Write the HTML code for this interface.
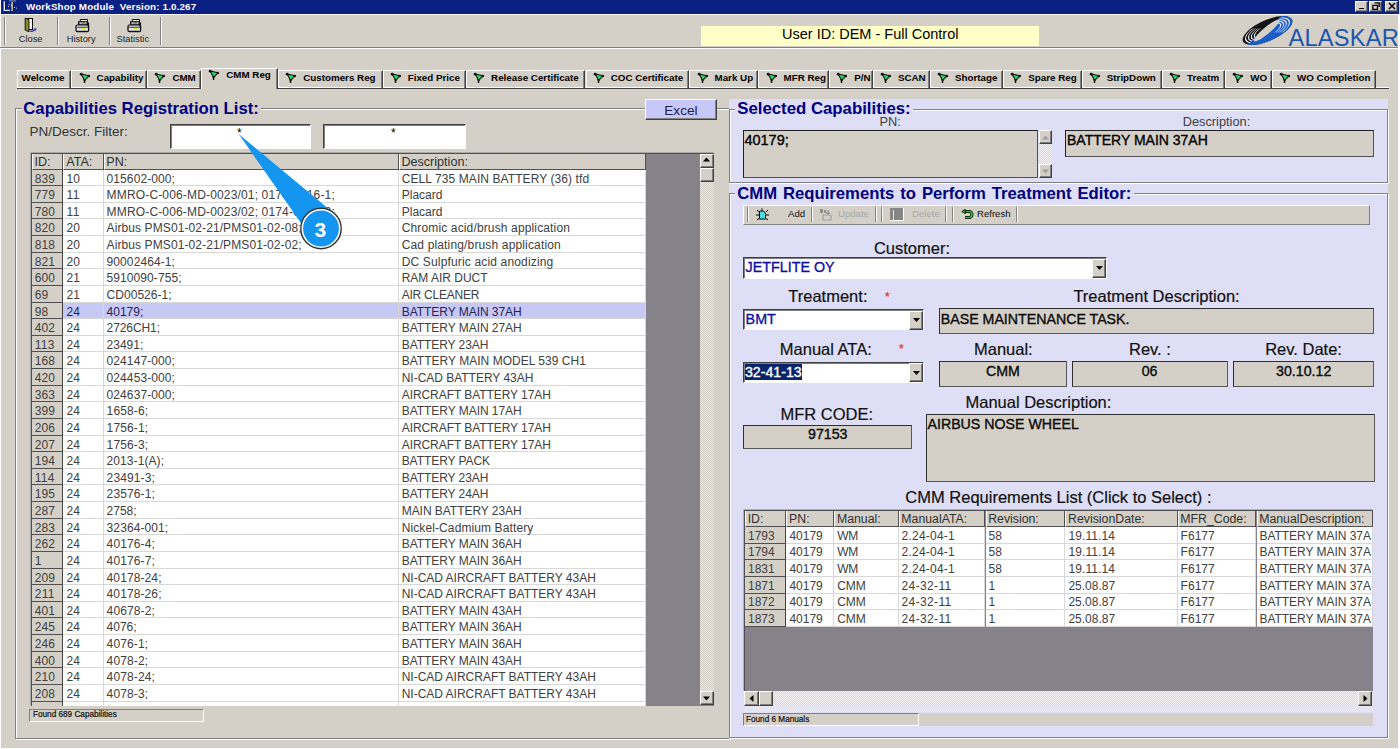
<!DOCTYPE html><html><head><meta charset="utf-8"><style>
*{box-sizing:border-box;margin:0;padding:0}
html,body{width:1400px;height:749px;overflow:hidden;background:#D4D0C8;font-family:"Liberation Sans",sans-serif;color:#000}
.ab{position:absolute}
.t{position:absolute;white-space:nowrap;line-height:1}
.sunk{position:absolute;border-top:1px solid #808080;border-left:1px solid #808080;border-bottom:1px solid #fff;border-right:1px solid #fff}
.sunk2{position:absolute;border:1px solid;border-color:#404040 #fff #fff #404040;box-shadow:inset 1px 1px 0 #808080}
.grp{position:absolute;border:1px solid #808080;box-shadow:1px 1px 0 #fff, inset 1px 1px 0 #fff}
.gtitle{position:absolute;font-weight:bold;color:#000080;white-space:nowrap;line-height:1}
.tab{position:absolute;top:69.5px;height:18px;border-top:1px solid #fff;border-left:1px solid #fff;border-right:1px solid #404040;box-shadow:inset -1px 0 0 #808080;font-weight:bold;font-size:9.8px;white-space:nowrap}
.tab span{position:absolute;top:3px;line-height:1}
.flag{position:absolute;top:3px;width:11px;height:12px;overflow:visible}
.row{position:absolute;height:16.67px}
.cell{position:absolute;white-space:nowrap;overflow:hidden;line-height:1}
.btn3d{position:absolute;background:#D4D0C8;border:1px solid;border-color:#fff #404040 #404040 #fff;box-shadow:inset -1px -1px 0 #808080}
</style></head><body>
<div class="ab" style="left:0;top:0;width:1400px;height:749px;border-left:1px solid #fff;border-top:1px solid #fff;"></div>
<div class="ab" style="left:1px;top:0;width:1398px;height:13.7px;background:#0A2082"></div>
<svg class="ab" style="left:0;top:0" width="20" height="14" viewBox="0 0 20 14"><rect x="9" y="0" width="7" height="1.6" fill="#5a6aa0"/><path d="M3.6 1.2h1.4v8.6h4.8v1.3h-6.2z" fill="#e8e8f0"/><rect x="5" y="2" width="1" height="8" fill="#202020"/><rect x="11.2" y="2" width="1.9" height="9" fill="#b0b088"/><rect x="13.1" y="2" width="0.9" height="9" fill="#101810"/><circle cx="9.3" cy="4.5" r="0.6" fill="#fff"/><circle cx="11.4" cy="5.6" r="0.6" fill="#fff"/><circle cx="8.4" cy="6.5" r="0.6" fill="#fff"/><circle cx="14.5" cy="7.4" r="0.6" fill="#ddd"/><circle cx="16.5" cy="8.2" r="0.6" fill="#aab"/></svg>
<div class="t" style="left:26px;top:2px;font-size:9.8px;font-weight:bold;color:#fff;letter-spacing:0.15px">WorkShop Module&nbsp; Version: 1.0.267</div>
<div class="btn3d" style="left:1355px;top:0.5px;width:13px;height:11px"></div>
<div class="btn3d" style="left:1369px;top:0.5px;width:13px;height:11px"></div>
<div class="btn3d" style="left:1385px;top:0.5px;width:13px;height:11px"></div>
<div class="ab" style="left:1359px;top:7.5px;width:5px;height:1.6px;background:#000"></div>
<svg class="ab" style="left:1372px;top:1.5px" width="8" height="8" viewBox="0 0 8 8"><path d="M2.5 0.8h4.7v4.2M0.8 3.3h4.7v4h-4.7z" stroke="#000" stroke-width="1.3" fill="none"/></svg>
<svg class="ab" style="left:1388px;top:1.8px" width="8" height="8" viewBox="0 0 8 8"><path d="M1 1L7 7M7 1L1 7" stroke="#000" stroke-width="1.5"/></svg>
<div class="ab" style="left:1px;top:13.7px;width:1398px;height:1px;background:#fff"></div>
<div class="ab" style="left:0;top:46.8px;width:1400px;height:1px;background:#808080"></div>
<div class="ab" style="left:0;top:47.8px;width:1400px;height:1px;background:#fff"></div>
<div class="ab" style="left:4px;top:17px;width:1px;height:28px;background:#808080"></div><div class="ab" style="left:5px;top:17px;width:1px;height:28px;background:#fff"></div>
<div class="ab" style="left:56.6px;top:17px;width:1px;height:28px;background:#808080"></div><div class="ab" style="left:57.6px;top:17px;width:1px;height:28px;background:#fff"></div>
<div class="ab" style="left:108.6px;top:17px;width:1px;height:28px;background:#808080"></div><div class="ab" style="left:109.6px;top:17px;width:1px;height:28px;background:#fff"></div>
<div class="ab" style="left:159.6px;top:17px;width:1px;height:28px;background:#808080"></div><div class="ab" style="left:160.6px;top:17px;width:1px;height:28px;background:#fff"></div>
<svg class="ab" style="left:23px;top:17px" width="16" height="16" viewBox="0 0 16 16"><path d="M3.5 1.5 h6 v11 h-6z" fill="#fff" stroke="#111" stroke-width="1.1"/><path d="M2.2 1.2 L6 2.6 V14.6 L2.2 13.2z" fill="#8E8C2A" stroke="#111" stroke-width="1"/><path d="M6.8 14 q2.5 1.2 5 -1.2" stroke="#3030B0" stroke-width="1.3" fill="none"/><path d="M10.8 11.4 L13.6 11.6 L12.6 14.2z" fill="#3030B0"/></svg>
<svg class="ab" style="left:72px;top:16px" width="22" height="18" viewBox="0 0 22 18"><path d="M8.3 3.5 H15.5 V6 H8.3z" fill="#fff" stroke="#111" stroke-width="1"/><path d="M6.6 5.8 H15.2 V9 H6.6z" fill="#8c8c8c" stroke="#111" stroke-width="1.1"/><path d="M8 7 h1.5M13 7.5 l1 -1.2" stroke="#fff" stroke-width="0.9"/><rect x="15.3" y="6.4" width="1.8" height="4" fill="#111"/><rect x="4" y="9.2" width="12.6" height="6.4" rx="1.3" fill="#e6e6e6" stroke="#111" stroke-width="1.3"/><path d="M5 10.2 H14.6" stroke="#fff" stroke-width="0.9"/><path d="M4.5 11.2 H16" stroke="#111" stroke-width="0.9"/><path d="M9.5 12.7 H13.5" stroke="#d0f038" stroke-width="1.3"/><path d="M5 14.4 H15.5" stroke="#a8a8a8" stroke-width="0.9"/></svg>
<svg class="ab" style="left:123.5px;top:16px" width="22" height="18" viewBox="0 0 22 18"><path d="M8.3 3.5 H15.5 V6 H8.3z" fill="#fff" stroke="#111" stroke-width="1"/><path d="M6.6 5.8 H15.2 V9 H6.6z" fill="#8c8c8c" stroke="#111" stroke-width="1.1"/><path d="M8 7 h1.5M13 7.5 l1 -1.2" stroke="#fff" stroke-width="0.9"/><rect x="15.3" y="6.4" width="1.8" height="4" fill="#111"/><rect x="4" y="9.2" width="12.6" height="6.4" rx="1.3" fill="#e6e6e6" stroke="#111" stroke-width="1.3"/><path d="M5 10.2 H14.6" stroke="#fff" stroke-width="0.9"/><path d="M4.5 11.2 H16" stroke="#111" stroke-width="0.9"/><path d="M9.5 12.7 H13.5" stroke="#d0f038" stroke-width="1.3"/><path d="M5 14.4 H15.5" stroke="#a8a8a8" stroke-width="0.9"/></svg>
<div class="t" style="left:18.7px;top:34.5px;font-size:9.3px;color:#222">Close</div>
<div class="t" style="left:66.7px;top:34.5px;font-size:9.3px;color:#222">History</div>
<div class="t" style="left:116.5px;top:34.5px;font-size:9.3px;color:#222">Statistic</div>
<div class="ab" style="left:701.4px;top:25.9px;width:337.6px;height:20.6px;background:#FFFFC8"></div>
<div class="t" style="left:782px;top:26.5px;font-size:14.5px;color:#000">User ID: DEM - Full Control</div>
<svg class="ab" style="left:1240px;top:14px" width="56" height="34" viewBox="0 0 56 34">
<defs>
<clipPath id="outer"><ellipse cx="0" cy="0" rx="19.2" ry="14.4"/></clipPath>
<clipPath id="lq"><rect x="-30" y="-2" width="26" height="30"/></clipPath>
<clipPath id="rq"><rect x="-1" y="-30" width="30" height="32"/></clipPath>
</defs>
<g transform="translate(27.5 16.5) matrix(1 0 -1.1 1 0 0)">
<g clip-path="url(#outer)">
<rect x="-30" y="-20" width="60" height="40" fill="#141414"/>
<path d="M-6 20 L-1.5 -20 L30 -20 L30 20z" fill="#1A5CC8"/>
<g fill="none" stroke="#F0F0F8" stroke-width="0.75">
<g clip-path="url(#lq)">
<ellipse rx="17" ry="12.6"/><ellipse rx="14.6" ry="11"/><ellipse rx="12.2" ry="9.5"/><ellipse rx="9.8" ry="8"/>
</g>
<g clip-path="url(#rq)">
<ellipse rx="17" ry="12.6"/><ellipse rx="14.6" ry="11"/><ellipse rx="12.2" ry="9.5"/><ellipse rx="9.8" ry="8"/>
</g>
</g>
</g>
<ellipse cx="-0.8" cy="0" rx="5.2" ry="10.8" fill="#D4D0C8"/>
</g>
</svg>
<div class="t" style="left:1288.5px;top:26.5px;font-size:23.6px;color:#1a56b0;letter-spacing:0.25px">ALASKAR</div>
<div class="ab" style="left:17px;top:87px;width:1371.5px;height:1px;background:#fff"></div>
<div class="ab" style="left:17px;top:88px;width:1371.5px;height:1.3px;background:#404040"></div>
<div class="tab" style="left:17.3px;top:69.5px;width:54.10000000000001px;height:18px;"><span style="left:3.3px;top:2.3px">Welcome</span></div>
<div class="tab" style="left:71.4px;top:69.5px;width:75.79999999999998px;height:18px;"><svg class="flag" style="left:6.3px;top:2.2px" viewBox="0 0 11 12"><path d="M5.3 6 L5.6 10" stroke="#111" stroke-width="1.5"/><path d="M2.2 1 L10 2.8 L5.6 7.6 z" fill="#26D862" stroke="#111" stroke-width="1.1" stroke-linejoin="round"/><circle cx="2.2" cy="1.2" r="1.4" fill="#111"/><circle cx="9.8" cy="3" r="1.3" fill="#111"/><circle cx="6" cy="6.8" r="0.9" fill="#111"/></svg><span style="left:24.2px;top:2.3px">Capability</span></div>
<div class="tab" style="left:147.2px;top:69.5px;width:53.80000000000001px;height:18px;"><svg class="flag" style="left:6.3px;top:2.2px" viewBox="0 0 11 12"><path d="M5.3 6 L5.6 10" stroke="#111" stroke-width="1.5"/><path d="M2.2 1 L10 2.8 L5.6 7.6 z" fill="#26D862" stroke="#111" stroke-width="1.1" stroke-linejoin="round"/><circle cx="2.2" cy="1.2" r="1.4" fill="#111"/><circle cx="9.8" cy="3" r="1.3" fill="#111"/><circle cx="6" cy="6.8" r="0.9" fill="#111"/></svg><span style="left:24.2px;top:2.3px">CMM</span></div>
<div class="tab" style="left:201px;top:67.5px;width:77px;height:21px;background:#D4D0C8;z-index:2;"><svg class="flag" style="left:6.3px;top:1px" viewBox="0 0 11 12"><path d="M5.3 6 L5.6 10" stroke="#111" stroke-width="1.5"/><path d="M2.2 1 L10 2.8 L5.6 7.6 z" fill="#26D862" stroke="#111" stroke-width="1.1" stroke-linejoin="round"/><circle cx="2.2" cy="1.2" r="1.4" fill="#111"/><circle cx="9.8" cy="3" r="1.3" fill="#111"/><circle cx="6" cy="6.8" r="0.9" fill="#111"/></svg><span style="left:24.2px;top:1.2px">CMM Reg</span></div>
<div class="tab" style="left:278px;top:69.5px;width:104.5px;height:18px;"><svg class="flag" style="left:6.3px;top:2.2px" viewBox="0 0 11 12"><path d="M5.3 6 L5.6 10" stroke="#111" stroke-width="1.5"/><path d="M2.2 1 L10 2.8 L5.6 7.6 z" fill="#26D862" stroke="#111" stroke-width="1.1" stroke-linejoin="round"/><circle cx="2.2" cy="1.2" r="1.4" fill="#111"/><circle cx="9.8" cy="3" r="1.3" fill="#111"/><circle cx="6" cy="6.8" r="0.9" fill="#111"/></svg><span style="left:24.2px;top:2.3px">Customers Reg</span></div>
<div class="tab" style="left:382.5px;top:69.5px;width:83.39999999999998px;height:18px;"><svg class="flag" style="left:6.3px;top:2.2px" viewBox="0 0 11 12"><path d="M5.3 6 L5.6 10" stroke="#111" stroke-width="1.5"/><path d="M2.2 1 L10 2.8 L5.6 7.6 z" fill="#26D862" stroke="#111" stroke-width="1.1" stroke-linejoin="round"/><circle cx="2.2" cy="1.2" r="1.4" fill="#111"/><circle cx="9.8" cy="3" r="1.3" fill="#111"/><circle cx="6" cy="6.8" r="0.9" fill="#111"/></svg><span style="left:24.2px;top:2.3px">Fixed Price</span></div>
<div class="tab" style="left:465.9px;top:69.5px;width:119.60000000000002px;height:18px;"><svg class="flag" style="left:6.3px;top:2.2px" viewBox="0 0 11 12"><path d="M5.3 6 L5.6 10" stroke="#111" stroke-width="1.5"/><path d="M2.2 1 L10 2.8 L5.6 7.6 z" fill="#26D862" stroke="#111" stroke-width="1.1" stroke-linejoin="round"/><circle cx="2.2" cy="1.2" r="1.4" fill="#111"/><circle cx="9.8" cy="3" r="1.3" fill="#111"/><circle cx="6" cy="6.8" r="0.9" fill="#111"/></svg><span style="left:24.2px;top:2.3px">Release Certificate</span></div>
<div class="tab" style="left:585.5px;top:69.5px;width:103.79999999999995px;height:18px;"><svg class="flag" style="left:6.3px;top:2.2px" viewBox="0 0 11 12"><path d="M5.3 6 L5.6 10" stroke="#111" stroke-width="1.5"/><path d="M2.2 1 L10 2.8 L5.6 7.6 z" fill="#26D862" stroke="#111" stroke-width="1.1" stroke-linejoin="round"/><circle cx="2.2" cy="1.2" r="1.4" fill="#111"/><circle cx="9.8" cy="3" r="1.3" fill="#111"/><circle cx="6" cy="6.8" r="0.9" fill="#111"/></svg><span style="left:24.2px;top:2.3px">COC Certificate</span></div>
<div class="tab" style="left:689.3px;top:69.5px;width:69.10000000000002px;height:18px;"><svg class="flag" style="left:6.3px;top:2.2px" viewBox="0 0 11 12"><path d="M5.3 6 L5.6 10" stroke="#111" stroke-width="1.5"/><path d="M2.2 1 L10 2.8 L5.6 7.6 z" fill="#26D862" stroke="#111" stroke-width="1.1" stroke-linejoin="round"/><circle cx="2.2" cy="1.2" r="1.4" fill="#111"/><circle cx="9.8" cy="3" r="1.3" fill="#111"/><circle cx="6" cy="6.8" r="0.9" fill="#111"/></svg><span style="left:24.2px;top:2.3px">Mark Up</span></div>
<div class="tab" style="left:758.4px;top:69.5px;width:70.60000000000002px;height:18px;"><svg class="flag" style="left:6.3px;top:2.2px" viewBox="0 0 11 12"><path d="M5.3 6 L5.6 10" stroke="#111" stroke-width="1.5"/><path d="M2.2 1 L10 2.8 L5.6 7.6 z" fill="#26D862" stroke="#111" stroke-width="1.1" stroke-linejoin="round"/><circle cx="2.2" cy="1.2" r="1.4" fill="#111"/><circle cx="9.8" cy="3" r="1.3" fill="#111"/><circle cx="6" cy="6.8" r="0.9" fill="#111"/></svg><span style="left:24.2px;top:2.3px">MFR Reg</span></div>
<div class="tab" style="left:829px;top:69.5px;width:43.700000000000045px;height:18px;"><svg class="flag" style="left:6.3px;top:2.2px" viewBox="0 0 11 12"><path d="M5.3 6 L5.6 10" stroke="#111" stroke-width="1.5"/><path d="M2.2 1 L10 2.8 L5.6 7.6 z" fill="#26D862" stroke="#111" stroke-width="1.1" stroke-linejoin="round"/><circle cx="2.2" cy="1.2" r="1.4" fill="#111"/><circle cx="9.8" cy="3" r="1.3" fill="#111"/><circle cx="6" cy="6.8" r="0.9" fill="#111"/></svg><span style="left:24.2px;top:2.3px">P/N</span></div>
<div class="tab" style="left:872.7px;top:69.5px;width:57.09999999999991px;height:18px;"><svg class="flag" style="left:6.3px;top:2.2px" viewBox="0 0 11 12"><path d="M5.3 6 L5.6 10" stroke="#111" stroke-width="1.5"/><path d="M2.2 1 L10 2.8 L5.6 7.6 z" fill="#26D862" stroke="#111" stroke-width="1.1" stroke-linejoin="round"/><circle cx="2.2" cy="1.2" r="1.4" fill="#111"/><circle cx="9.8" cy="3" r="1.3" fill="#111"/><circle cx="6" cy="6.8" r="0.9" fill="#111"/></svg><span style="left:24.2px;top:2.3px">SCAN</span></div>
<div class="tab" style="left:929.8px;top:69.5px;width:73.20000000000005px;height:18px;"><svg class="flag" style="left:6.3px;top:2.2px" viewBox="0 0 11 12"><path d="M5.3 6 L5.6 10" stroke="#111" stroke-width="1.5"/><path d="M2.2 1 L10 2.8 L5.6 7.6 z" fill="#26D862" stroke="#111" stroke-width="1.1" stroke-linejoin="round"/><circle cx="2.2" cy="1.2" r="1.4" fill="#111"/><circle cx="9.8" cy="3" r="1.3" fill="#111"/><circle cx="6" cy="6.8" r="0.9" fill="#111"/></svg><span style="left:24.2px;top:2.3px">Shortage</span></div>
<div class="tab" style="left:1003px;top:69.5px;width:78.59999999999991px;height:18px;"><svg class="flag" style="left:6.3px;top:2.2px" viewBox="0 0 11 12"><path d="M5.3 6 L5.6 10" stroke="#111" stroke-width="1.5"/><path d="M2.2 1 L10 2.8 L5.6 7.6 z" fill="#26D862" stroke="#111" stroke-width="1.1" stroke-linejoin="round"/><circle cx="2.2" cy="1.2" r="1.4" fill="#111"/><circle cx="9.8" cy="3" r="1.3" fill="#111"/><circle cx="6" cy="6.8" r="0.9" fill="#111"/></svg><span style="left:24.2px;top:2.3px">Spare Reg</span></div>
<div class="tab" style="left:1081.6px;top:69.5px;width:80.20000000000005px;height:18px;"><svg class="flag" style="left:6.3px;top:2.2px" viewBox="0 0 11 12"><path d="M5.3 6 L5.6 10" stroke="#111" stroke-width="1.5"/><path d="M2.2 1 L10 2.8 L5.6 7.6 z" fill="#26D862" stroke="#111" stroke-width="1.1" stroke-linejoin="round"/><circle cx="2.2" cy="1.2" r="1.4" fill="#111"/><circle cx="9.8" cy="3" r="1.3" fill="#111"/><circle cx="6" cy="6.8" r="0.9" fill="#111"/></svg><span style="left:24.2px;top:2.3px">StripDown</span></div>
<div class="tab" style="left:1161.8px;top:69.5px;width:63.200000000000045px;height:18px;"><svg class="flag" style="left:6.3px;top:2.2px" viewBox="0 0 11 12"><path d="M5.3 6 L5.6 10" stroke="#111" stroke-width="1.5"/><path d="M2.2 1 L10 2.8 L5.6 7.6 z" fill="#26D862" stroke="#111" stroke-width="1.1" stroke-linejoin="round"/><circle cx="2.2" cy="1.2" r="1.4" fill="#111"/><circle cx="9.8" cy="3" r="1.3" fill="#111"/><circle cx="6" cy="6.8" r="0.9" fill="#111"/></svg><span style="left:24.2px;top:2.3px">Treatm</span></div>
<div class="tab" style="left:1225px;top:69.5px;width:46.799999999999955px;height:18px;"><svg class="flag" style="left:6.3px;top:2.2px" viewBox="0 0 11 12"><path d="M5.3 6 L5.6 10" stroke="#111" stroke-width="1.5"/><path d="M2.2 1 L10 2.8 L5.6 7.6 z" fill="#26D862" stroke="#111" stroke-width="1.1" stroke-linejoin="round"/><circle cx="2.2" cy="1.2" r="1.4" fill="#111"/><circle cx="9.8" cy="3" r="1.3" fill="#111"/><circle cx="6" cy="6.8" r="0.9" fill="#111"/></svg><span style="left:24.2px;top:2.3px">WO</span></div>
<div class="tab" style="left:1271.8px;top:69.5px;width:103.79999999999995px;height:18px;"><svg class="flag" style="left:6.3px;top:2.2px" viewBox="0 0 11 12"><path d="M5.3 6 L5.6 10" stroke="#111" stroke-width="1.5"/><path d="M2.2 1 L10 2.8 L5.6 7.6 z" fill="#26D862" stroke="#111" stroke-width="1.1" stroke-linejoin="round"/><circle cx="2.2" cy="1.2" r="1.4" fill="#111"/><circle cx="9.8" cy="3" r="1.3" fill="#111"/><circle cx="6" cy="6.8" r="0.9" fill="#111"/></svg><span style="left:24.2px;top:2.3px">WO Completion</span></div>
<div class="grp" style="left:15.2px;top:108.4px;width:715px;height:630.5px"></div>
<div class="ab" style="left:21.5px;top:100px;width:239.5px;height:16px;background:#D4D0C8"></div>
<div class="gtitle" style="left:23.3px;top:100.9px;font-size:16.7px">Capabilities Registration List:</div>
<div class="btn3d" style="left:645px;top:98.7px;width:71.8px;height:21.3px;background:#C8C8F8"></div>
<div class="t" style="left:664.3px;top:103.5px;font-size:13.6px;color:#202048">Excel</div>
<div class="t" style="left:29.6px;top:125.4px;font-size:13.5px;color:#333">PN/Descr. Filter:</div>
<div class="sunk2" style="left:169.5px;top:124.2px;width:141.0px;height:25px;background:#fff"></div>
<div class="t" style="left:237.0px;top:127px;font-size:12px;color:#000">*</div>
<div class="sunk2" style="left:322.5px;top:124.2px;width:143.0px;height:25px;background:#fff"></div>
<div class="t" style="left:391.0px;top:127px;font-size:12px;color:#000">*</div>
<div class="ab" style="left:30.8px;top:152.5px;width:683.5px;height:553px;border-top:1px solid #505050;border-left:1px solid #505050;box-shadow:-0.6px -0.6px 0 #909090;background:#858289;overflow:hidden">
<div class="ab" style="left:0px;top:0px;width:31.7px;height:16px;background:#D4D0C8;border-left:1px solid #fff;border-right:1px solid #505050;border-bottom:1px solid #505050"></div>
<div class="t" style="left:2.7px;top:2.3px;font-size:12.6px;color:#303030">ID:</div>
<div class="ab" style="left:31.7px;top:0px;width:40.099999999999994px;height:16px;background:#D4D0C8;border-left:1px solid #fff;border-right:1px solid #505050;border-bottom:1px solid #505050"></div>
<div class="t" style="left:34.4px;top:2.3px;font-size:12.6px;color:#303030">ATA:</div>
<div class="ab" style="left:71.8px;top:0px;width:295.09999999999997px;height:16px;background:#D4D0C8;border-left:1px solid #fff;border-right:1px solid #505050;border-bottom:1px solid #505050"></div>
<div class="t" style="left:74.5px;top:2.3px;font-size:12.6px;color:#303030">PN:</div>
<div class="ab" style="left:366.9px;top:0px;width:247.70000000000005px;height:16px;background:#D4D0C8;border-left:1px solid #fff;border-right:1px solid #505050;border-bottom:1px solid #505050"></div>
<div class="t" style="left:369.59999999999997px;top:2.3px;font-size:12.6px;color:#303030">Description:</div>
<div class="ab" style="left:0px;top:16.0px;width:31.7px;height:16.625px;background:#D4D0C8;border-right:1px solid #404040;border-bottom:1px solid #505050"></div>
<div class="t" style="left:3px;top:19.0px;font-size:12px;letter-spacing:-0.007px;color:#404040">839</div>
<div class="ab" style="left:31.7px;top:16.0px;width:40.099999999999994px;height:16.625px;background:#fff;border-right:1px solid #D8D8D8;border-bottom:1px solid #D8D8D8"></div>
<div class="t" style="left:34.7px;top:19.0px;font-size:12px;letter-spacing:-0.007px;color:#404040">10</div>
<div class="ab" style="left:71.8px;top:16.0px;width:295.09999999999997px;height:16.625px;background:#fff;border-right:1px solid #D8D8D8;border-bottom:1px solid #D8D8D8"></div>
<div class="t" style="left:74.8px;top:19.0px;font-size:12px;letter-spacing:0.085px;color:#404040">015602-000;</div>
<div class="ab" style="left:366.9px;top:16.0px;width:247.70000000000005px;height:16.625px;background:#fff;border-right:1px solid #D8D8D8;border-bottom:1px solid #D8D8D8"></div>
<div class="t" style="left:369.9px;top:19.0px;font-size:12px;letter-spacing:0.085px;color:#404040">CELL 735 MAIN BATTERY (36) tfd</div>
<div class="ab" style="left:0px;top:32.625px;width:31.7px;height:16.625px;background:#D4D0C8;border-right:1px solid #404040;border-bottom:1px solid #505050"></div>
<div class="t" style="left:3px;top:35.625px;font-size:12px;letter-spacing:-0.007px;color:#404040">779</div>
<div class="ab" style="left:31.7px;top:32.625px;width:40.099999999999994px;height:16.625px;background:#fff;border-right:1px solid #D8D8D8;border-bottom:1px solid #D8D8D8"></div>
<div class="t" style="left:34.7px;top:35.625px;font-size:12px;letter-spacing:0.438px;color:#404040">11</div>
<div class="ab" style="left:71.8px;top:32.625px;width:295.09999999999997px;height:16.625px;background:#fff;border-right:1px solid #D8D8D8;border-bottom:1px solid #D8D8D8"></div>
<div class="t" style="left:74.8px;top:35.625px;font-size:12px;letter-spacing:0.159px;color:#404040">MMRO-C-006-MD-0023/01; 0174-0016-1;</div>
<div class="ab" style="left:366.9px;top:32.625px;width:247.70000000000005px;height:16.625px;background:#fff;border-right:1px solid #D8D8D8;border-bottom:1px solid #D8D8D8"></div>
<div class="t" style="left:369.9px;top:35.625px;font-size:12px;letter-spacing:0.021px;color:#404040">Placard</div>
<div class="ab" style="left:0px;top:49.25px;width:31.7px;height:16.625px;background:#D4D0C8;border-right:1px solid #404040;border-bottom:1px solid #505050"></div>
<div class="t" style="left:3px;top:52.25px;font-size:12px;letter-spacing:-0.007px;color:#404040">780</div>
<div class="ab" style="left:31.7px;top:49.25px;width:40.099999999999994px;height:16.625px;background:#fff;border-right:1px solid #D8D8D8;border-bottom:1px solid #D8D8D8"></div>
<div class="t" style="left:34.7px;top:52.25px;font-size:12px;letter-spacing:0.438px;color:#404040">11</div>
<div class="ab" style="left:71.8px;top:49.25px;width:295.09999999999997px;height:16.625px;background:#fff;border-right:1px solid #D8D8D8;border-bottom:1px solid #D8D8D8"></div>
<div class="t" style="left:74.8px;top:52.25px;font-size:12px;letter-spacing:0.159px;color:#404040">MMRO-C-006-MD-0023/02; 0174-0016-2;</div>
<div class="ab" style="left:366.9px;top:49.25px;width:247.70000000000005px;height:16.625px;background:#fff;border-right:1px solid #D8D8D8;border-bottom:1px solid #D8D8D8"></div>
<div class="t" style="left:369.9px;top:52.25px;font-size:12px;letter-spacing:0.021px;color:#404040">Placard</div>
<div class="ab" style="left:0px;top:65.875px;width:31.7px;height:16.625px;background:#D4D0C8;border-right:1px solid #404040;border-bottom:1px solid #505050"></div>
<div class="t" style="left:3px;top:68.875px;font-size:12px;letter-spacing:-0.007px;color:#404040">820</div>
<div class="ab" style="left:31.7px;top:65.875px;width:40.099999999999994px;height:16.625px;background:#fff;border-right:1px solid #D8D8D8;border-bottom:1px solid #D8D8D8"></div>
<div class="t" style="left:34.7px;top:68.875px;font-size:12px;letter-spacing:-0.007px;color:#404040">20</div>
<div class="ab" style="left:71.8px;top:65.875px;width:295.09999999999997px;height:16.625px;background:#fff;border-right:1px solid #D8D8D8;border-bottom:1px solid #D8D8D8"></div>
<div class="t" style="left:74.8px;top:68.875px;font-size:12px;letter-spacing:0.094px;color:#404040">Airbus PMS01-02-21/PMS01-02-08;</div>
<div class="ab" style="left:366.9px;top:65.875px;width:247.70000000000005px;height:16.625px;background:#fff;border-right:1px solid #D8D8D8;border-bottom:1px solid #D8D8D8"></div>
<div class="t" style="left:369.9px;top:68.875px;font-size:12px;letter-spacing:0.142px;color:#404040">Chromic acid/brush application</div>
<div class="ab" style="left:0px;top:82.5px;width:31.7px;height:16.625px;background:#D4D0C8;border-right:1px solid #404040;border-bottom:1px solid #505050"></div>
<div class="t" style="left:3px;top:85.5px;font-size:12px;letter-spacing:-0.007px;color:#404040">818</div>
<div class="ab" style="left:31.7px;top:82.5px;width:40.099999999999994px;height:16.625px;background:#fff;border-right:1px solid #D8D8D8;border-bottom:1px solid #D8D8D8"></div>
<div class="t" style="left:34.7px;top:85.5px;font-size:12px;letter-spacing:-0.007px;color:#404040">20</div>
<div class="ab" style="left:71.8px;top:82.5px;width:295.09999999999997px;height:16.625px;background:#fff;border-right:1px solid #D8D8D8;border-bottom:1px solid #D8D8D8"></div>
<div class="t" style="left:74.8px;top:85.5px;font-size:12px;letter-spacing:0.094px;color:#404040">Airbus PMS01-02-21/PMS01-02-02;</div>
<div class="ab" style="left:366.9px;top:82.5px;width:247.70000000000005px;height:16.625px;background:#fff;border-right:1px solid #D8D8D8;border-bottom:1px solid #D8D8D8"></div>
<div class="t" style="left:369.9px;top:85.5px;font-size:12px;letter-spacing:0.152px;color:#404040">Cad plating/brush application</div>
<div class="ab" style="left:0px;top:99.125px;width:31.7px;height:16.625px;background:#D4D0C8;border-right:1px solid #404040;border-bottom:1px solid #505050"></div>
<div class="t" style="left:3px;top:102.125px;font-size:12px;letter-spacing:-0.007px;color:#404040">821</div>
<div class="ab" style="left:31.7px;top:99.125px;width:40.099999999999994px;height:16.625px;background:#fff;border-right:1px solid #D8D8D8;border-bottom:1px solid #D8D8D8"></div>
<div class="t" style="left:34.7px;top:102.125px;font-size:12px;letter-spacing:-0.007px;color:#404040">20</div>
<div class="ab" style="left:71.8px;top:99.125px;width:295.09999999999997px;height:16.625px;background:#fff;border-right:1px solid #D8D8D8;border-bottom:1px solid #D8D8D8"></div>
<div class="t" style="left:74.8px;top:102.125px;font-size:12px;letter-spacing:0.085px;color:#404040">90002464-1;</div>
<div class="ab" style="left:366.9px;top:99.125px;width:247.70000000000005px;height:16.625px;background:#fff;border-right:1px solid #D8D8D8;border-bottom:1px solid #D8D8D8"></div>
<div class="t" style="left:369.9px;top:102.125px;font-size:12px;letter-spacing:0.158px;color:#404040">DC Sulpfuric acid anodizing</div>
<div class="ab" style="left:0px;top:115.75px;width:31.7px;height:16.625px;background:#D4D0C8;border-right:1px solid #404040;border-bottom:1px solid #505050"></div>
<div class="t" style="left:3px;top:118.75px;font-size:12px;letter-spacing:-0.007px;color:#404040">600</div>
<div class="ab" style="left:31.7px;top:115.75px;width:40.099999999999994px;height:16.625px;background:#fff;border-right:1px solid #D8D8D8;border-bottom:1px solid #D8D8D8"></div>
<div class="t" style="left:34.7px;top:118.75px;font-size:12px;letter-spacing:-0.007px;color:#404040">21</div>
<div class="ab" style="left:71.8px;top:115.75px;width:295.09999999999997px;height:16.625px;background:#fff;border-right:1px solid #D8D8D8;border-bottom:1px solid #D8D8D8"></div>
<div class="t" style="left:74.8px;top:118.75px;font-size:12px;letter-spacing:0.078px;color:#404040">5910090-755;</div>
<div class="ab" style="left:366.9px;top:115.75px;width:247.70000000000005px;height:16.625px;background:#fff;border-right:1px solid #D8D8D8;border-bottom:1px solid #D8D8D8"></div>
<div class="t" style="left:369.9px;top:118.75px;font-size:12px;letter-spacing:-0.014px;color:#404040">RAM AIR DUCT</div>
<div class="ab" style="left:0px;top:132.375px;width:31.7px;height:16.625px;background:#D4D0C8;border-right:1px solid #404040;border-bottom:1px solid #505050"></div>
<div class="t" style="left:3px;top:135.375px;font-size:12px;letter-spacing:-0.007px;color:#404040">69</div>
<div class="ab" style="left:31.7px;top:132.375px;width:40.099999999999994px;height:16.625px;background:#fff;border-right:1px solid #D8D8D8;border-bottom:1px solid #D8D8D8"></div>
<div class="t" style="left:34.7px;top:135.375px;font-size:12px;letter-spacing:-0.007px;color:#404040">21</div>
<div class="ab" style="left:71.8px;top:132.375px;width:295.09999999999997px;height:16.625px;background:#fff;border-right:1px solid #D8D8D8;border-bottom:1px solid #D8D8D8"></div>
<div class="t" style="left:74.8px;top:135.375px;font-size:12px;letter-spacing:0.029px;color:#404040">CD00526-1;</div>
<div class="ab" style="left:366.9px;top:132.375px;width:247.70000000000005px;height:16.625px;background:#fff;border-right:1px solid #D8D8D8;border-bottom:1px solid #D8D8D8"></div>
<div class="t" style="left:369.9px;top:135.375px;font-size:12px;letter-spacing:-0.229px;color:#404040">AIR CLEANER</div>
<div class="ab" style="left:0px;top:149.0px;width:31.7px;height:16.625px;background:#D4D0C8;border-right:1px solid #404040;border-bottom:1px solid #505050"></div>
<div class="t" style="left:3px;top:152.0px;font-size:12px;letter-spacing:-0.007px;color:#404040">98</div>
<div class="ab" style="left:31.7px;top:149.0px;width:40.099999999999994px;height:16.625px;background:#C8C8F4;border-right:1px solid #D8D8D8;border-bottom:1px solid #D8D8D8"></div>
<div class="t" style="left:34.7px;top:152.0px;font-size:12px;letter-spacing:-0.007px;color:#22225A">24</div>
<div class="ab" style="left:71.8px;top:149.0px;width:295.09999999999997px;height:16.625px;background:#C8C8F4;border-right:1px solid #D8D8D8;border-bottom:1px solid #D8D8D8"></div>
<div class="t" style="left:74.8px;top:152.0px;font-size:12px;letter-spacing:-0.006px;color:#22225A">40179;</div>
<div class="ab" style="left:366.9px;top:149.0px;width:247.70000000000005px;height:16.625px;background:#C8C8F4;border-right:1px solid #D8D8D8;border-bottom:1px solid #D8D8D8"></div>
<div class="t" style="left:369.9px;top:152.0px;font-size:12px;letter-spacing:-0.041px;color:#22225A">BATTERY MAIN 37AH</div>
<div class="ab" style="left:0px;top:165.625px;width:31.7px;height:16.625px;background:#D4D0C8;border-right:1px solid #404040;border-bottom:1px solid #505050"></div>
<div class="t" style="left:3px;top:168.625px;font-size:12px;letter-spacing:-0.007px;color:#404040">402</div>
<div class="ab" style="left:31.7px;top:165.625px;width:40.099999999999994px;height:16.625px;background:#fff;border-right:1px solid #D8D8D8;border-bottom:1px solid #D8D8D8"></div>
<div class="t" style="left:34.7px;top:168.625px;font-size:12px;letter-spacing:-0.007px;color:#404040">24</div>
<div class="ab" style="left:71.8px;top:165.625px;width:295.09999999999997px;height:16.625px;background:#fff;border-right:1px solid #D8D8D8;border-bottom:1px solid #D8D8D8"></div>
<div class="t" style="left:74.8px;top:168.625px;font-size:12px;letter-spacing:-0.088px;color:#404040">2726CH1;</div>
<div class="ab" style="left:366.9px;top:165.625px;width:247.70000000000005px;height:16.625px;background:#fff;border-right:1px solid #D8D8D8;border-bottom:1px solid #D8D8D8"></div>
<div class="t" style="left:369.9px;top:168.625px;font-size:12px;letter-spacing:-0.041px;color:#404040">BATTERY MAIN 27AH</div>
<div class="ab" style="left:0px;top:182.25px;width:31.7px;height:16.625px;background:#D4D0C8;border-right:1px solid #404040;border-bottom:1px solid #505050"></div>
<div class="t" style="left:3px;top:185.25px;font-size:12px;letter-spacing:0.290px;color:#404040">113</div>
<div class="ab" style="left:31.7px;top:182.25px;width:40.099999999999994px;height:16.625px;background:#fff;border-right:1px solid #D8D8D8;border-bottom:1px solid #D8D8D8"></div>
<div class="t" style="left:34.7px;top:185.25px;font-size:12px;letter-spacing:-0.007px;color:#404040">24</div>
<div class="ab" style="left:71.8px;top:182.25px;width:295.09999999999997px;height:16.625px;background:#fff;border-right:1px solid #D8D8D8;border-bottom:1px solid #D8D8D8"></div>
<div class="t" style="left:74.8px;top:185.25px;font-size:12px;letter-spacing:-0.006px;color:#404040">23491;</div>
<div class="ab" style="left:366.9px;top:182.25px;width:247.70000000000005px;height:16.625px;background:#fff;border-right:1px solid #D8D8D8;border-bottom:1px solid #D8D8D8"></div>
<div class="t" style="left:369.9px;top:185.25px;font-size:12px;letter-spacing:-0.059px;color:#404040">BATTERY 23AH</div>
<div class="ab" style="left:0px;top:198.875px;width:31.7px;height:16.625px;background:#D4D0C8;border-right:1px solid #404040;border-bottom:1px solid #505050"></div>
<div class="t" style="left:3px;top:201.875px;font-size:12px;letter-spacing:-0.007px;color:#404040">168</div>
<div class="ab" style="left:31.7px;top:198.875px;width:40.099999999999994px;height:16.625px;background:#fff;border-right:1px solid #D8D8D8;border-bottom:1px solid #D8D8D8"></div>
<div class="t" style="left:34.7px;top:201.875px;font-size:12px;letter-spacing:-0.007px;color:#404040">24</div>
<div class="ab" style="left:71.8px;top:198.875px;width:295.09999999999997px;height:16.625px;background:#fff;border-right:1px solid #D8D8D8;border-bottom:1px solid #D8D8D8"></div>
<div class="t" style="left:74.8px;top:201.875px;font-size:12px;letter-spacing:0.085px;color:#404040">024147-000;</div>
<div class="ab" style="left:366.9px;top:198.875px;width:247.70000000000005px;height:16.625px;background:#fff;border-right:1px solid #D8D8D8;border-bottom:1px solid #D8D8D8"></div>
<div class="t" style="left:369.9px;top:201.875px;font-size:12px;letter-spacing:0.021px;color:#404040">BATTERY MAIN MODEL 539 CH1</div>
<div class="ab" style="left:0px;top:215.5px;width:31.7px;height:16.625px;background:#D4D0C8;border-right:1px solid #404040;border-bottom:1px solid #505050"></div>
<div class="t" style="left:3px;top:218.5px;font-size:12px;letter-spacing:-0.007px;color:#404040">420</div>
<div class="ab" style="left:31.7px;top:215.5px;width:40.099999999999994px;height:16.625px;background:#fff;border-right:1px solid #D8D8D8;border-bottom:1px solid #D8D8D8"></div>
<div class="t" style="left:34.7px;top:218.5px;font-size:12px;letter-spacing:-0.007px;color:#404040">24</div>
<div class="ab" style="left:71.8px;top:215.5px;width:295.09999999999997px;height:16.625px;background:#fff;border-right:1px solid #D8D8D8;border-bottom:1px solid #D8D8D8"></div>
<div class="t" style="left:74.8px;top:218.5px;font-size:12px;letter-spacing:0.085px;color:#404040">024453-000;</div>
<div class="ab" style="left:366.9px;top:215.5px;width:247.70000000000005px;height:16.625px;background:#fff;border-right:1px solid #D8D8D8;border-bottom:1px solid #D8D8D8"></div>
<div class="t" style="left:369.9px;top:218.5px;font-size:12px;letter-spacing:-0.019px;color:#404040">NI-CAD BATTERY 43AH</div>
<div class="ab" style="left:0px;top:232.125px;width:31.7px;height:16.625px;background:#D4D0C8;border-right:1px solid #404040;border-bottom:1px solid #505050"></div>
<div class="t" style="left:3px;top:235.125px;font-size:12px;letter-spacing:-0.007px;color:#404040">363</div>
<div class="ab" style="left:31.7px;top:232.125px;width:40.099999999999994px;height:16.625px;background:#fff;border-right:1px solid #D8D8D8;border-bottom:1px solid #D8D8D8"></div>
<div class="t" style="left:34.7px;top:235.125px;font-size:12px;letter-spacing:-0.007px;color:#404040">24</div>
<div class="ab" style="left:71.8px;top:232.125px;width:295.09999999999997px;height:16.625px;background:#fff;border-right:1px solid #D8D8D8;border-bottom:1px solid #D8D8D8"></div>
<div class="t" style="left:74.8px;top:235.125px;font-size:12px;letter-spacing:0.085px;color:#404040">024637-000;</div>
<div class="ab" style="left:366.9px;top:232.125px;width:247.70000000000005px;height:16.625px;background:#fff;border-right:1px solid #D8D8D8;border-bottom:1px solid #D8D8D8"></div>
<div class="t" style="left:369.9px;top:235.125px;font-size:12px;letter-spacing:-0.063px;color:#404040">AIRCRAFT BATTERY 17AH</div>
<div class="ab" style="left:0px;top:248.75px;width:31.7px;height:16.625px;background:#D4D0C8;border-right:1px solid #404040;border-bottom:1px solid #505050"></div>
<div class="t" style="left:3px;top:251.75px;font-size:12px;letter-spacing:-0.007px;color:#404040">399</div>
<div class="ab" style="left:31.7px;top:248.75px;width:40.099999999999994px;height:16.625px;background:#fff;border-right:1px solid #D8D8D8;border-bottom:1px solid #D8D8D8"></div>
<div class="t" style="left:34.7px;top:251.75px;font-size:12px;letter-spacing:-0.007px;color:#404040">24</div>
<div class="ab" style="left:71.8px;top:248.75px;width:295.09999999999997px;height:16.625px;background:#fff;border-right:1px solid #D8D8D8;border-bottom:1px solid #D8D8D8"></div>
<div class="t" style="left:74.8px;top:251.75px;font-size:12px;letter-spacing:0.138px;color:#404040">1658-6;</div>
<div class="ab" style="left:366.9px;top:248.75px;width:247.70000000000005px;height:16.625px;background:#fff;border-right:1px solid #D8D8D8;border-bottom:1px solid #D8D8D8"></div>
<div class="t" style="left:369.9px;top:251.75px;font-size:12px;letter-spacing:-0.041px;color:#404040">BATTERY MAIN 17AH</div>
<div class="ab" style="left:0px;top:265.375px;width:31.7px;height:16.625px;background:#D4D0C8;border-right:1px solid #404040;border-bottom:1px solid #505050"></div>
<div class="t" style="left:3px;top:268.375px;font-size:12px;letter-spacing:-0.007px;color:#404040">206</div>
<div class="ab" style="left:31.7px;top:265.375px;width:40.099999999999994px;height:16.625px;background:#fff;border-right:1px solid #D8D8D8;border-bottom:1px solid #D8D8D8"></div>
<div class="t" style="left:34.7px;top:268.375px;font-size:12px;letter-spacing:-0.007px;color:#404040">24</div>
<div class="ab" style="left:71.8px;top:265.375px;width:295.09999999999997px;height:16.625px;background:#fff;border-right:1px solid #D8D8D8;border-bottom:1px solid #D8D8D8"></div>
<div class="t" style="left:74.8px;top:268.375px;font-size:12px;letter-spacing:0.138px;color:#404040">1756-1;</div>
<div class="ab" style="left:366.9px;top:265.375px;width:247.70000000000005px;height:16.625px;background:#fff;border-right:1px solid #D8D8D8;border-bottom:1px solid #D8D8D8"></div>
<div class="t" style="left:369.9px;top:268.375px;font-size:12px;letter-spacing:-0.063px;color:#404040">AIRCRAFT BATTERY 17AH</div>
<div class="ab" style="left:0px;top:282.0px;width:31.7px;height:16.625px;background:#D4D0C8;border-right:1px solid #404040;border-bottom:1px solid #505050"></div>
<div class="t" style="left:3px;top:285.0px;font-size:12px;letter-spacing:-0.007px;color:#404040">207</div>
<div class="ab" style="left:31.7px;top:282.0px;width:40.099999999999994px;height:16.625px;background:#fff;border-right:1px solid #D8D8D8;border-bottom:1px solid #D8D8D8"></div>
<div class="t" style="left:34.7px;top:285.0px;font-size:12px;letter-spacing:-0.007px;color:#404040">24</div>
<div class="ab" style="left:71.8px;top:282.0px;width:295.09999999999997px;height:16.625px;background:#fff;border-right:1px solid #D8D8D8;border-bottom:1px solid #D8D8D8"></div>
<div class="t" style="left:74.8px;top:285.0px;font-size:12px;letter-spacing:0.138px;color:#404040">1756-3;</div>
<div class="ab" style="left:366.9px;top:282.0px;width:247.70000000000005px;height:16.625px;background:#fff;border-right:1px solid #D8D8D8;border-bottom:1px solid #D8D8D8"></div>
<div class="t" style="left:369.9px;top:285.0px;font-size:12px;letter-spacing:-0.063px;color:#404040">AIRCRAFT BATTERY 17AH</div>
<div class="ab" style="left:0px;top:298.625px;width:31.7px;height:16.625px;background:#D4D0C8;border-right:1px solid #404040;border-bottom:1px solid #505050"></div>
<div class="t" style="left:3px;top:301.625px;font-size:12px;letter-spacing:-0.007px;color:#404040">194</div>
<div class="ab" style="left:31.7px;top:298.625px;width:40.099999999999994px;height:16.625px;background:#fff;border-right:1px solid #D8D8D8;border-bottom:1px solid #D8D8D8"></div>
<div class="t" style="left:34.7px;top:301.625px;font-size:12px;letter-spacing:-0.007px;color:#404040">24</div>
<div class="ab" style="left:71.8px;top:298.625px;width:295.09999999999997px;height:16.625px;background:#fff;border-right:1px solid #D8D8D8;border-bottom:1px solid #D8D8D8"></div>
<div class="t" style="left:74.8px;top:301.625px;font-size:12px;letter-spacing:0.080px;color:#404040">2013-1(A);</div>
<div class="ab" style="left:366.9px;top:298.625px;width:247.70000000000005px;height:16.625px;background:#fff;border-right:1px solid #D8D8D8;border-bottom:1px solid #D8D8D8"></div>
<div class="t" style="left:369.9px;top:301.625px;font-size:12px;letter-spacing:-0.067px;color:#404040">BATTERY PACK</div>
<div class="ab" style="left:0px;top:315.25px;width:31.7px;height:16.625px;background:#D4D0C8;border-right:1px solid #404040;border-bottom:1px solid #505050"></div>
<div class="t" style="left:3px;top:318.25px;font-size:12px;letter-spacing:0.290px;color:#404040">114</div>
<div class="ab" style="left:31.7px;top:315.25px;width:40.099999999999994px;height:16.625px;background:#fff;border-right:1px solid #D8D8D8;border-bottom:1px solid #D8D8D8"></div>
<div class="t" style="left:34.7px;top:318.25px;font-size:12px;letter-spacing:-0.007px;color:#404040">24</div>
<div class="ab" style="left:71.8px;top:315.25px;width:295.09999999999997px;height:16.625px;background:#fff;border-right:1px solid #D8D8D8;border-bottom:1px solid #D8D8D8"></div>
<div class="t" style="left:74.8px;top:318.25px;font-size:12px;letter-spacing:0.120px;color:#404040">23491-3;</div>
<div class="ab" style="left:366.9px;top:315.25px;width:247.70000000000005px;height:16.625px;background:#fff;border-right:1px solid #D8D8D8;border-bottom:1px solid #D8D8D8"></div>
<div class="t" style="left:369.9px;top:318.25px;font-size:12px;letter-spacing:-0.059px;color:#404040">BATTERY 23AH</div>
<div class="ab" style="left:0px;top:331.875px;width:31.7px;height:16.625px;background:#D4D0C8;border-right:1px solid #404040;border-bottom:1px solid #505050"></div>
<div class="t" style="left:3px;top:334.875px;font-size:12px;letter-spacing:-0.007px;color:#404040">195</div>
<div class="ab" style="left:31.7px;top:331.875px;width:40.099999999999994px;height:16.625px;background:#fff;border-right:1px solid #D8D8D8;border-bottom:1px solid #D8D8D8"></div>
<div class="t" style="left:34.7px;top:334.875px;font-size:12px;letter-spacing:-0.007px;color:#404040">24</div>
<div class="ab" style="left:71.8px;top:331.875px;width:295.09999999999997px;height:16.625px;background:#fff;border-right:1px solid #D8D8D8;border-bottom:1px solid #D8D8D8"></div>
<div class="t" style="left:74.8px;top:334.875px;font-size:12px;letter-spacing:0.120px;color:#404040">23576-1;</div>
<div class="ab" style="left:366.9px;top:331.875px;width:247.70000000000005px;height:16.625px;background:#fff;border-right:1px solid #D8D8D8;border-bottom:1px solid #D8D8D8"></div>
<div class="t" style="left:369.9px;top:334.875px;font-size:12px;letter-spacing:-0.059px;color:#404040">BATTERY 24AH</div>
<div class="ab" style="left:0px;top:348.5px;width:31.7px;height:16.625px;background:#D4D0C8;border-right:1px solid #404040;border-bottom:1px solid #505050"></div>
<div class="t" style="left:3px;top:351.5px;font-size:12px;letter-spacing:-0.007px;color:#404040">287</div>
<div class="ab" style="left:31.7px;top:348.5px;width:40.099999999999994px;height:16.625px;background:#fff;border-right:1px solid #D8D8D8;border-bottom:1px solid #D8D8D8"></div>
<div class="t" style="left:34.7px;top:351.5px;font-size:12px;letter-spacing:-0.007px;color:#404040">24</div>
<div class="ab" style="left:71.8px;top:348.5px;width:295.09999999999997px;height:16.625px;background:#fff;border-right:1px solid #D8D8D8;border-bottom:1px solid #D8D8D8"></div>
<div class="t" style="left:74.8px;top:351.5px;font-size:12px;letter-spacing:-0.006px;color:#404040">2758;</div>
<div class="ab" style="left:366.9px;top:348.5px;width:247.70000000000005px;height:16.625px;background:#fff;border-right:1px solid #D8D8D8;border-bottom:1px solid #D8D8D8"></div>
<div class="t" style="left:369.9px;top:351.5px;font-size:12px;letter-spacing:-0.041px;color:#404040">MAIN BATTERY 23AH</div>
<div class="ab" style="left:0px;top:365.125px;width:31.7px;height:16.625px;background:#D4D0C8;border-right:1px solid #404040;border-bottom:1px solid #505050"></div>
<div class="t" style="left:3px;top:368.125px;font-size:12px;letter-spacing:-0.007px;color:#404040">283</div>
<div class="ab" style="left:31.7px;top:365.125px;width:40.099999999999994px;height:16.625px;background:#fff;border-right:1px solid #D8D8D8;border-bottom:1px solid #D8D8D8"></div>
<div class="t" style="left:34.7px;top:368.125px;font-size:12px;letter-spacing:-0.007px;color:#404040">24</div>
<div class="ab" style="left:71.8px;top:365.125px;width:295.09999999999997px;height:16.625px;background:#fff;border-right:1px solid #D8D8D8;border-bottom:1px solid #D8D8D8"></div>
<div class="t" style="left:74.8px;top:368.125px;font-size:12px;letter-spacing:0.095px;color:#404040">32364-001;</div>
<div class="ab" style="left:366.9px;top:365.125px;width:247.70000000000005px;height:16.625px;background:#fff;border-right:1px solid #D8D8D8;border-bottom:1px solid #D8D8D8"></div>
<div class="t" style="left:369.9px;top:368.125px;font-size:12px;letter-spacing:0.105px;color:#404040">Nickel-Cadmium Battery</div>
<div class="ab" style="left:0px;top:381.75px;width:31.7px;height:16.625px;background:#D4D0C8;border-right:1px solid #404040;border-bottom:1px solid #505050"></div>
<div class="t" style="left:3px;top:384.75px;font-size:12px;letter-spacing:-0.007px;color:#404040">262</div>
<div class="ab" style="left:31.7px;top:381.75px;width:40.099999999999994px;height:16.625px;background:#fff;border-right:1px solid #D8D8D8;border-bottom:1px solid #D8D8D8"></div>
<div class="t" style="left:34.7px;top:384.75px;font-size:12px;letter-spacing:-0.007px;color:#404040">24</div>
<div class="ab" style="left:71.8px;top:381.75px;width:295.09999999999997px;height:16.625px;background:#fff;border-right:1px solid #D8D8D8;border-bottom:1px solid #D8D8D8"></div>
<div class="t" style="left:74.8px;top:384.75px;font-size:12px;letter-spacing:0.120px;color:#404040">40176-4;</div>
<div class="ab" style="left:366.9px;top:381.75px;width:247.70000000000005px;height:16.625px;background:#fff;border-right:1px solid #D8D8D8;border-bottom:1px solid #D8D8D8"></div>
<div class="t" style="left:369.9px;top:384.75px;font-size:12px;letter-spacing:-0.041px;color:#404040">BATTERY MAIN 36AH</div>
<div class="ab" style="left:0px;top:398.375px;width:31.7px;height:16.625px;background:#D4D0C8;border-right:1px solid #404040;border-bottom:1px solid #505050"></div>
<div class="t" style="left:3px;top:401.375px;font-size:12px;letter-spacing:-0.007px;color:#404040">1</div>
<div class="ab" style="left:31.7px;top:398.375px;width:40.099999999999994px;height:16.625px;background:#fff;border-right:1px solid #D8D8D8;border-bottom:1px solid #D8D8D8"></div>
<div class="t" style="left:34.7px;top:401.375px;font-size:12px;letter-spacing:-0.007px;color:#404040">24</div>
<div class="ab" style="left:71.8px;top:398.375px;width:295.09999999999997px;height:16.625px;background:#fff;border-right:1px solid #D8D8D8;border-bottom:1px solid #D8D8D8"></div>
<div class="t" style="left:74.8px;top:401.375px;font-size:12px;letter-spacing:0.120px;color:#404040">40176-7;</div>
<div class="ab" style="left:366.9px;top:398.375px;width:247.70000000000005px;height:16.625px;background:#fff;border-right:1px solid #D8D8D8;border-bottom:1px solid #D8D8D8"></div>
<div class="t" style="left:369.9px;top:401.375px;font-size:12px;letter-spacing:-0.041px;color:#404040">BATTERY MAIN 36AH</div>
<div class="ab" style="left:0px;top:415.0px;width:31.7px;height:16.625px;background:#D4D0C8;border-right:1px solid #404040;border-bottom:1px solid #505050"></div>
<div class="t" style="left:3px;top:418.0px;font-size:12px;letter-spacing:-0.007px;color:#404040">209</div>
<div class="ab" style="left:31.7px;top:415.0px;width:40.099999999999994px;height:16.625px;background:#fff;border-right:1px solid #D8D8D8;border-bottom:1px solid #D8D8D8"></div>
<div class="t" style="left:34.7px;top:418.0px;font-size:12px;letter-spacing:-0.007px;color:#404040">24</div>
<div class="ab" style="left:71.8px;top:415.0px;width:295.09999999999997px;height:16.625px;background:#fff;border-right:1px solid #D8D8D8;border-bottom:1px solid #D8D8D8"></div>
<div class="t" style="left:74.8px;top:418.0px;font-size:12px;letter-spacing:0.106px;color:#404040">40178-24;</div>
<div class="ab" style="left:366.9px;top:415.0px;width:247.70000000000005px;height:16.625px;background:#fff;border-right:1px solid #D8D8D8;border-bottom:1px solid #D8D8D8"></div>
<div class="t" style="left:369.9px;top:418.0px;font-size:12px;letter-spacing:-0.012px;color:#404040">NI-CAD AIRCRAFT BATTERY 43AH</div>
<div class="ab" style="left:0px;top:431.625px;width:31.7px;height:16.625px;background:#D4D0C8;border-right:1px solid #404040;border-bottom:1px solid #505050"></div>
<div class="t" style="left:3px;top:434.625px;font-size:12px;letter-spacing:0.290px;color:#404040">211</div>
<div class="ab" style="left:31.7px;top:431.625px;width:40.099999999999994px;height:16.625px;background:#fff;border-right:1px solid #D8D8D8;border-bottom:1px solid #D8D8D8"></div>
<div class="t" style="left:34.7px;top:434.625px;font-size:12px;letter-spacing:-0.007px;color:#404040">24</div>
<div class="ab" style="left:71.8px;top:431.625px;width:295.09999999999997px;height:16.625px;background:#fff;border-right:1px solid #D8D8D8;border-bottom:1px solid #D8D8D8"></div>
<div class="t" style="left:74.8px;top:434.625px;font-size:12px;letter-spacing:0.106px;color:#404040">40178-26;</div>
<div class="ab" style="left:366.9px;top:431.625px;width:247.70000000000005px;height:16.625px;background:#fff;border-right:1px solid #D8D8D8;border-bottom:1px solid #D8D8D8"></div>
<div class="t" style="left:369.9px;top:434.625px;font-size:12px;letter-spacing:-0.012px;color:#404040">NI-CAD AIRCRAFT BATTERY 43AH</div>
<div class="ab" style="left:0px;top:448.25px;width:31.7px;height:16.625px;background:#D4D0C8;border-right:1px solid #404040;border-bottom:1px solid #505050"></div>
<div class="t" style="left:3px;top:451.25px;font-size:12px;letter-spacing:-0.007px;color:#404040">401</div>
<div class="ab" style="left:31.7px;top:448.25px;width:40.099999999999994px;height:16.625px;background:#fff;border-right:1px solid #D8D8D8;border-bottom:1px solid #D8D8D8"></div>
<div class="t" style="left:34.7px;top:451.25px;font-size:12px;letter-spacing:-0.007px;color:#404040">24</div>
<div class="ab" style="left:71.8px;top:448.25px;width:295.09999999999997px;height:16.625px;background:#fff;border-right:1px solid #D8D8D8;border-bottom:1px solid #D8D8D8"></div>
<div class="t" style="left:74.8px;top:451.25px;font-size:12px;letter-spacing:0.120px;color:#404040">40678-2;</div>
<div class="ab" style="left:366.9px;top:448.25px;width:247.70000000000005px;height:16.625px;background:#fff;border-right:1px solid #D8D8D8;border-bottom:1px solid #D8D8D8"></div>
<div class="t" style="left:369.9px;top:451.25px;font-size:12px;letter-spacing:-0.041px;color:#404040">BATTERY MAIN 43AH</div>
<div class="ab" style="left:0px;top:464.875px;width:31.7px;height:16.625px;background:#D4D0C8;border-right:1px solid #404040;border-bottom:1px solid #505050"></div>
<div class="t" style="left:3px;top:467.875px;font-size:12px;letter-spacing:-0.007px;color:#404040">245</div>
<div class="ab" style="left:31.7px;top:464.875px;width:40.099999999999994px;height:16.625px;background:#fff;border-right:1px solid #D8D8D8;border-bottom:1px solid #D8D8D8"></div>
<div class="t" style="left:34.7px;top:467.875px;font-size:12px;letter-spacing:-0.007px;color:#404040">24</div>
<div class="ab" style="left:71.8px;top:464.875px;width:295.09999999999997px;height:16.625px;background:#fff;border-right:1px solid #D8D8D8;border-bottom:1px solid #D8D8D8"></div>
<div class="t" style="left:74.8px;top:467.875px;font-size:12px;letter-spacing:-0.006px;color:#404040">4076;</div>
<div class="ab" style="left:366.9px;top:464.875px;width:247.70000000000005px;height:16.625px;background:#fff;border-right:1px solid #D8D8D8;border-bottom:1px solid #D8D8D8"></div>
<div class="t" style="left:369.9px;top:467.875px;font-size:12px;letter-spacing:-0.041px;color:#404040">BATTERY MAIN 36AH</div>
<div class="ab" style="left:0px;top:481.5px;width:31.7px;height:16.625px;background:#D4D0C8;border-right:1px solid #404040;border-bottom:1px solid #505050"></div>
<div class="t" style="left:3px;top:484.5px;font-size:12px;letter-spacing:-0.007px;color:#404040">246</div>
<div class="ab" style="left:31.7px;top:481.5px;width:40.099999999999994px;height:16.625px;background:#fff;border-right:1px solid #D8D8D8;border-bottom:1px solid #D8D8D8"></div>
<div class="t" style="left:34.7px;top:484.5px;font-size:12px;letter-spacing:-0.007px;color:#404040">24</div>
<div class="ab" style="left:71.8px;top:481.5px;width:295.09999999999997px;height:16.625px;background:#fff;border-right:1px solid #D8D8D8;border-bottom:1px solid #D8D8D8"></div>
<div class="t" style="left:74.8px;top:484.5px;font-size:12px;letter-spacing:0.138px;color:#404040">4076-1;</div>
<div class="ab" style="left:366.9px;top:481.5px;width:247.70000000000005px;height:16.625px;background:#fff;border-right:1px solid #D8D8D8;border-bottom:1px solid #D8D8D8"></div>
<div class="t" style="left:369.9px;top:484.5px;font-size:12px;letter-spacing:-0.041px;color:#404040">BATTERY MAIN 36AH</div>
<div class="ab" style="left:0px;top:498.125px;width:31.7px;height:16.625px;background:#D4D0C8;border-right:1px solid #404040;border-bottom:1px solid #505050"></div>
<div class="t" style="left:3px;top:501.125px;font-size:12px;letter-spacing:-0.007px;color:#404040">400</div>
<div class="ab" style="left:31.7px;top:498.125px;width:40.099999999999994px;height:16.625px;background:#fff;border-right:1px solid #D8D8D8;border-bottom:1px solid #D8D8D8"></div>
<div class="t" style="left:34.7px;top:501.125px;font-size:12px;letter-spacing:-0.007px;color:#404040">24</div>
<div class="ab" style="left:71.8px;top:498.125px;width:295.09999999999997px;height:16.625px;background:#fff;border-right:1px solid #D8D8D8;border-bottom:1px solid #D8D8D8"></div>
<div class="t" style="left:74.8px;top:501.125px;font-size:12px;letter-spacing:0.138px;color:#404040">4078-2;</div>
<div class="ab" style="left:366.9px;top:498.125px;width:247.70000000000005px;height:16.625px;background:#fff;border-right:1px solid #D8D8D8;border-bottom:1px solid #D8D8D8"></div>
<div class="t" style="left:369.9px;top:501.125px;font-size:12px;letter-spacing:-0.041px;color:#404040">BATTERY MAIN 43AH</div>
<div class="ab" style="left:0px;top:514.75px;width:31.7px;height:16.625px;background:#D4D0C8;border-right:1px solid #404040;border-bottom:1px solid #505050"></div>
<div class="t" style="left:3px;top:517.75px;font-size:12px;letter-spacing:-0.007px;color:#404040">210</div>
<div class="ab" style="left:31.7px;top:514.75px;width:40.099999999999994px;height:16.625px;background:#fff;border-right:1px solid #D8D8D8;border-bottom:1px solid #D8D8D8"></div>
<div class="t" style="left:34.7px;top:517.75px;font-size:12px;letter-spacing:-0.007px;color:#404040">24</div>
<div class="ab" style="left:71.8px;top:514.75px;width:295.09999999999997px;height:16.625px;background:#fff;border-right:1px solid #D8D8D8;border-bottom:1px solid #D8D8D8"></div>
<div class="t" style="left:74.8px;top:517.75px;font-size:12px;letter-spacing:0.120px;color:#404040">4078-24;</div>
<div class="ab" style="left:366.9px;top:514.75px;width:247.70000000000005px;height:16.625px;background:#fff;border-right:1px solid #D8D8D8;border-bottom:1px solid #D8D8D8"></div>
<div class="t" style="left:369.9px;top:517.75px;font-size:12px;letter-spacing:-0.012px;color:#404040">NI-CAD AIRCRAFT BATTERY 43AH</div>
<div class="ab" style="left:0px;top:531.375px;width:31.7px;height:16.625px;background:#D4D0C8;border-right:1px solid #404040;border-bottom:1px solid #505050"></div>
<div class="t" style="left:3px;top:534.375px;font-size:12px;letter-spacing:-0.007px;color:#404040">208</div>
<div class="ab" style="left:31.7px;top:531.375px;width:40.099999999999994px;height:16.625px;background:#fff;border-right:1px solid #D8D8D8;border-bottom:1px solid #D8D8D8"></div>
<div class="t" style="left:34.7px;top:534.375px;font-size:12px;letter-spacing:-0.007px;color:#404040">24</div>
<div class="ab" style="left:71.8px;top:531.375px;width:295.09999999999997px;height:16.625px;background:#fff;border-right:1px solid #D8D8D8;border-bottom:1px solid #D8D8D8"></div>
<div class="t" style="left:74.8px;top:534.375px;font-size:12px;letter-spacing:0.138px;color:#404040">4078-3;</div>
<div class="ab" style="left:366.9px;top:531.375px;width:247.70000000000005px;height:16.625px;background:#fff;border-right:1px solid #D8D8D8;border-bottom:1px solid #D8D8D8"></div>
<div class="t" style="left:369.9px;top:534.375px;font-size:12px;letter-spacing:-0.012px;color:#404040">NI-CAD AIRCRAFT BATTERY 43AH</div>
<div class="ab" style="left:0px;top:548.0px;width:31.7px;height:16.625px;background:#D4D0C8;border-right:1px solid #404040;border-bottom:1px solid #505050"></div>
<div class="ab" style="left:31.7px;top:548.0px;width:40.099999999999994px;height:16.625px;background:#fff;border-right:1px solid #D8D8D8;border-bottom:1px solid #D8D8D8"></div>
<div class="ab" style="left:71.8px;top:548.0px;width:295.09999999999997px;height:16.625px;background:#fff;border-right:1px solid #D8D8D8;border-bottom:1px solid #D8D8D8"></div>
<div class="ab" style="left:366.9px;top:548.0px;width:247.70000000000005px;height:16.625px;background:#fff;border-right:1px solid #D8D8D8;border-bottom:1px solid #D8D8D8"></div>
</div>
<div class="ab" style="left:699.5px;top:153.5px;width:14.5px;height:551.5px;background:repeating-conic-gradient(#E8E6E0 0 25%, #D4D0C8 0 50%) 0 0/2px 2px"></div>
<div class="btn3d" style="left:699.5px;top:153.5px;width:14.5px;height:14px"></div>
<div class="btn3d" style="left:699.5px;top:167.5px;width:14.5px;height:14px"></div>
<div class="btn3d" style="left:699.5px;top:691px;width:14.5px;height:14px"></div>
<svg class="ab" style="left:703.0px;top:157px" width="7" height="5"><path d="M0 4.5 L3.5 0.5 L7 4.5z" fill="#000"/></svg>
<svg class="ab" style="left:703.0px;top:695.5px" width="7" height="5"><path d="M0 0.5 L3.5 4.5 L7 0.5z" fill="#000"/></svg>
<div class="sunk" style="left:29.2px;top:709px;width:175px;height:12.5px;"></div>
<div class="t" style="left:33px;top:711px;font-size:8.2px;-webkit-text-stroke:0.2px #111;color:#111">Found 689 Capabilities</div>
<div class="ab" style="left:729.2px;top:98.6px;width:659.3px;height:640.2px;background:#DEDEF6"></div>
<div class="ab" style="left:1398.4px;top:14px;width:1.2px;height:735px;background:#fff"></div>
<div class="grp" style="left:729.2px;top:108.7px;width:658.5px;height:74px"></div>
<div class="ab" style="left:735px;top:100px;width:178px;height:16px;background:#DEDEF6"></div>
<div class="gtitle" style="left:737.2px;top:101.2px;font-size:16.8px">Selected Capabilities:</div>
<div class="t" style="left:879.5px;top:116px;font-size:12.8px;color:#404040">PN:</div>
<div class="t" style="left:1182.7px;top:116px;font-size:12.8px;color:#404040">Description:</div>
<div class="ab" style="left:743.2px;top:130.2px;width:294.8px;height:47.6px;background:#D4D0C8;border:1px solid;border-color:#202020 #505050 #505050 #202020"></div>
<div class="t" style="left:744.4px;top:132.8px;font-size:14.5px;-webkit-text-stroke:0.35px #000;color:#000">40179;</div>
<div class="ab" style="left:1038.5px;top:130.2px;width:13.5px;height:47.2px;background:repeating-conic-gradient(#F0EEF0 0 25%, #DCDAD8 0 50%) 0 0/2px 2px"></div>
<div class="btn3d" style="left:1038.5px;top:130.2px;width:13.5px;height:13.5px"></div>
<div class="btn3d" style="left:1038.5px;top:164px;width:13.5px;height:13.5px"></div>
<svg class="ab" style="left:1042px;top:134.5px" width="7" height="5"><path d="M0 4.5 L3.5 0.5 L7 4.5z" fill="#A0A0A0"/></svg>
<svg class="ab" style="left:1042px;top:168.5px" width="7" height="5"><path d="M0 0.5 L3.5 4.5 L7 0.5z" fill="#A0A0A0"/></svg>
<div class="ab" style="left:1065px;top:129.9px;width:309.3px;height:27.2px;background:#D4D0C8;border:1px solid;border-color:#202020 #505050 #505050 #202020"></div>
<div class="t" style="left:1067px;top:132.8px;font-size:14px;-webkit-text-stroke:0.35px #000;color:#000">BATTERY MAIN 37AH</div>
<div class="grp" style="left:729.2px;top:192.6px;width:658.5px;height:545.9px"></div>
<div class="ab" style="left:735px;top:184px;width:399px;height:16px;background:#DEDEF6"></div>
<div class="gtitle" style="left:737.2px;top:185.5px;font-size:16.7px;word-spacing:1.3px">CMM Requirements to Perform Treatment Editor:</div>
<div class="ab" style="left:743px;top:204.5px;width:627.4px;height:20px;background:#D4D0C8;border-top:1px solid #fff;border-left:1px solid #fff;border-bottom:1px solid #808080;border-right:1px solid #808080"></div>
<div class="ab" style="left:746.5px;top:207px;width:1px;height:15px;background:#808080"></div><div class="ab" style="left:747.5px;top:207px;width:1px;height:15px;background:#fff"></div>
<div class="ab" style="left:810.5px;top:207px;width:1px;height:15px;background:#808080"></div><div class="ab" style="left:811.5px;top:207px;width:1px;height:15px;background:#fff"></div>
<div class="ab" style="left:874.5px;top:207px;width:1px;height:15px;background:#808080"></div><div class="ab" style="left:875.5px;top:207px;width:1px;height:15px;background:#fff"></div>
<div class="ab" style="left:881.4px;top:207px;width:1px;height:15px;background:#808080"></div><div class="ab" style="left:882.4px;top:207px;width:1px;height:15px;background:#fff"></div>
<div class="ab" style="left:945.4px;top:207px;width:1px;height:15px;background:#808080"></div><div class="ab" style="left:946.4px;top:207px;width:1px;height:15px;background:#fff"></div>
<div class="ab" style="left:952.3px;top:207px;width:1px;height:15px;background:#808080"></div><div class="ab" style="left:953.3px;top:207px;width:1px;height:15px;background:#fff"></div>
<div class="ab" style="left:1016.3px;top:207px;width:1px;height:15px;background:#808080"></div><div class="ab" style="left:1017.3px;top:207px;width:1px;height:15px;background:#fff"></div>
<svg class="ab" style="left:755px;top:207.5px" width="15" height="14" viewBox="0 0 15 14"><path d="M4.5 3 h4 l2 2 v6 h-6z" fill="#40e0e8" stroke="#000" stroke-width="1"/><path d="M2 2l2 2M13 2l-2 2M1 7h3M11 7h3M2 12l2-1.5M13 12l-2-1.5M7 0.5v2" stroke="#000" stroke-width="1"/></svg>
<div class="t" style="left:788px;top:209.2px;font-size:9.6px;color:#111">Add</div>
<svg class="ab" style="left:819px;top:208px" width="14" height="13" viewBox="0 0 14 13"><path d="M1 1h3v4h-3zM5 2h2v3h-2z" fill="#909090"/><path d="M4 7h8v5h-8z" fill="none" stroke="#a0a0a0" stroke-width="1.2"/><path d="M9 2v4l-2-1.5M9 6l2-1.5" stroke="#909090" stroke-width="1.2" fill="none"/></svg>
<div class="t" style="left:838px;top:209.2px;font-size:9.6px;color:#A8A8A8">Update</div>
<div class="ab" style="left:890px;top:207.5px;width:14px;height:13.5px;background:#868686;border-right:1px solid #fff;border-bottom:1px solid #fff"></div><div class="ab" style="left:893px;top:210px;width:1.3px;height:10px;background:#e0e0e0"></div>
<div class="t" style="left:912px;top:209.2px;font-size:9.6px;color:#A8A8A8">Delete</div>
<svg class="ab" style="left:961px;top:208.5px" width="13" height="12" viewBox="0 0 13 12"><path d="M3 2.5 h5 a3 3 0 0 1 0 6 h-4" fill="none" stroke="#000" stroke-width="3"/><path d="M3 2.5 h5 a3 3 0 0 1 0 6 h-4" fill="none" stroke="#30c030" stroke-width="1.6"/><path d="M0.8 2.5 l3.5 -2.2 v4.4z" fill="#30c030" stroke="#000" stroke-width="0.8"/></svg>
<div class="t" style="left:977px;top:209.2px;font-size:9.6px;color:#111">Refresh</div>
<div class="t" style="left:873.9px;top:240.4px;font-size:16.5px;-webkit-text-stroke:0.2px #111;color:#111">Customer:</div>
<div class="sunk2" style="left:743.4px;top:256.7px;width:364.0000000000001px;height:21.900000000000034px;background:#fff"></div>
<div class="btn3d" style="left:1092.1000000000001px;top:258.5px;width:14.0px;height:19.600000000000033px"></div>
<svg class="ab" style="left:1095.6000000000001px;top:266.15px" width="7" height="4"><path d="M0 0 L7 0 L3.5 4z" fill="#000"/></svg>
<div class="t" style="left:745.6px;top:259.8px;font-size:14.3px;-webkit-text-stroke:0.35px #1010A0;color:#1010A0">JETFLITE OY</div>
<div class="t" style="left:788.3px;top:288.3px;font-size:16.5px;-webkit-text-stroke:0.2px #111;color:#111">Treatment:</div>
<div class="t" style="left:885px;top:291.3px;font-size:12px;-webkit-text-stroke:0.2px #E03030;color:#E03030">*</div>
<div class="sunk2" style="left:743.4px;top:309px;width:180.89999999999998px;height:21.30000000000001px;background:#fff"></div>
<div class="btn3d" style="left:909.0px;top:310.8px;width:14.0px;height:19.00000000000001px"></div>
<svg class="ab" style="left:912.5px;top:318.15px" width="7" height="4"><path d="M0 0 L7 0 L3.5 4z" fill="#000"/></svg>
<div class="t" style="left:745.6px;top:312.1px;font-size:14.3px;-webkit-text-stroke:0.35px #1010A0;color:#1010A0">BMT</div>
<div class="ab" style="left:938.8px;top:308.2px;width:435.70000000000005px;height:25.80000000000001px;background:#D4D0C8;border:1px solid;border-color:#303030 #585858 #585858 #303030"></div>
<div class="t" style="left:940.8px;top:311.7px;font-size:14.2px;font-weight:normal;-webkit-text-stroke:0.35px #000;color:#111">BASE MAINTENANCE TASK.</div>
<div class="t" style="left:1073.4px;top:288.3px;font-size:16.5px;-webkit-text-stroke:0.2px #111;color:#111">Treatment Description:</div>
<div class="t" style="left:779.8px;top:341.3px;font-size:16.5px;-webkit-text-stroke:0.2px #111;color:#111">Manual ATA:</div>
<div class="t" style="left:899px;top:343.1px;font-size:12px;-webkit-text-stroke:0.2px #E03030;color:#E03030">*</div>
<div class="sunk2" style="left:743.4px;top:361.6px;width:180.89999999999998px;height:21.399999999999977px;background:#fff"></div>
<div class="btn3d" style="left:909.0px;top:363.40000000000003px;width:14.0px;height:19.099999999999977px"></div>
<svg class="ab" style="left:912.5px;top:370.8px" width="7" height="4"><path d="M0 0 L7 0 L3.5 4z" fill="#000"/></svg>
<div class="ab" style="left:744.9px;top:364.1px;width:57.5px;height:16px;background:#0A246A"></div>
<div class="t" style="left:744.9px;top:364.90000000000003px;font-size:14.2px;-webkit-text-stroke:0.35px #fff;color:#fff">32-41-13</div>
<div class="t" style="left:974px;top:341.3px;font-size:16.5px;-webkit-text-stroke:0.2px #111;color:#111">Manual:</div>
<div class="ab" style="left:938.8px;top:361px;width:128.20000000000005px;height:25.600000000000023px;background:#D4D0C8;border:1px solid;border-color:#303030 #585858 #585858 #303030"></div>
<div class="t" style="left:938.8px;width:128.20000000000005px;text-align:center;top:363.7px;font-size:14.2px;font-weight:normal;-webkit-text-stroke:0.35px #000;color:#111">CMM</div>
<div class="t" style="left:1129px;top:341.3px;font-size:16.5px;-webkit-text-stroke:0.2px #111;color:#111">Rev. :</div>
<div class="ab" style="left:1071.7px;top:361px;width:155.89999999999986px;height:25.600000000000023px;background:#D4D0C8;border:1px solid;border-color:#303030 #585858 #585858 #303030"></div>
<div class="t" style="left:1071.7px;width:155.89999999999986px;text-align:center;top:363.7px;font-size:14.2px;font-weight:normal;-webkit-text-stroke:0.35px #000;color:#111">06</div>
<div class="t" style="left:1265.2px;top:341.3px;font-size:16.5px;-webkit-text-stroke:0.2px #111;color:#111">Rev. Date:</div>
<div class="ab" style="left:1232.9px;top:361px;width:141.5999999999999px;height:25.600000000000023px;background:#D4D0C8;border:1px solid;border-color:#303030 #585858 #585858 #303030"></div>
<div class="t" style="left:1232.9px;width:141.5999999999999px;text-align:center;top:363.7px;font-size:14.2px;font-weight:normal;-webkit-text-stroke:0.35px #000;color:#111">30.10.12</div>
<div class="t" style="left:780.5px;top:405.5px;font-size:16.5px;-webkit-text-stroke:0.2px #111;color:#111">MFR CODE:</div>
<div class="ab" style="left:743.4px;top:424.5px;width:168.70000000000005px;height:24.30000000000001px;background:#D4D0C8;border:1px solid;border-color:#303030 #585858 #585858 #303030"></div>
<div class="t" style="left:743.4px;width:168.70000000000005px;text-align:center;top:427.3px;font-size:14.2px;font-weight:normal;-webkit-text-stroke:0.35px #000;color:#111">97153</div>
<div class="t" style="left:965.5px;top:394.3px;font-size:16.5px;-webkit-text-stroke:0.2px #111;color:#111">Manual Description:</div>
<div class="ab" style="left:925.5px;top:413.6px;width:449.5px;height:68.69999999999999px;background:#D4D0C8;border:1px solid;border-color:#303030 #585858 #585858 #303030"></div>
<div class="t" style="left:927.5px;top:417.1px;font-size:14.2px;font-weight:normal;-webkit-text-stroke:0.35px #000;color:#111">AIRBUS NOSE WHEEL</div>
<div class="t" style="left:905.3px;top:489.3px;font-size:16.5px;-webkit-text-stroke:0.2px #111;color:#111">CMM Requirements List (Click to Select) :</div>
<div class="ab" style="left:744px;top:509.7px;width:629px;height:181.5px;border-top:1px solid #505050;border-left:1px solid #505050;box-shadow:-0.6px -0.6px 0 #909090;background:#858289;overflow:hidden">
<div class="ab" style="left:0px;top:0;width:41.39999999999998px;height:16.5px;background:#D4D0C8;border-left:1px solid #fff;border-right:1px solid #505050;border-bottom:1px solid #505050"></div>
<div class="t" style="left:2.7px;top:2.3px;font-size:12.3px;color:#303030">ID:</div>
<div class="ab" style="left:41.39999999999998px;top:0;width:47.80000000000007px;height:16.5px;background:#D4D0C8;border-left:1px solid #fff;border-right:1px solid #505050;border-bottom:1px solid #505050"></div>
<div class="t" style="left:44.09999999999998px;top:2.3px;font-size:12.3px;color:#303030">PN:</div>
<div class="ab" style="left:89.20000000000005px;top:0;width:64.39999999999998px;height:16.5px;background:#D4D0C8;border-left:1px solid #fff;border-right:1px solid #505050;border-bottom:1px solid #505050"></div>
<div class="t" style="left:91.90000000000005px;top:2.3px;font-size:12.3px;color:#303030">Manual:</div>
<div class="ab" style="left:153.60000000000002px;top:0;width:86.89999999999998px;height:16.5px;background:#D4D0C8;border-left:1px solid #fff;border-right:1px solid #505050;border-bottom:1px solid #505050"></div>
<div class="t" style="left:156.3px;top:2.3px;font-size:12.3px;color:#303030">ManualATA:</div>
<div class="ab" style="left:240.5px;top:0;width:79.90000000000009px;height:16.5px;background:#D4D0C8;border-left:1px solid #fff;border-right:1px solid #505050;border-bottom:1px solid #505050"></div>
<div class="t" style="left:243.2px;top:2.3px;font-size:12.3px;color:#303030">Revision:</div>
<div class="ab" style="left:320.4000000000001px;top:0;width:112.19999999999982px;height:16.5px;background:#D4D0C8;border-left:1px solid #fff;border-right:1px solid #505050;border-bottom:1px solid #505050"></div>
<div class="t" style="left:323.1000000000001px;top:2.3px;font-size:12.3px;color:#303030">RevisionDate:</div>
<div class="ab" style="left:432.5999999999999px;top:0;width:78.90000000000009px;height:16.5px;background:#D4D0C8;border-left:1px solid #fff;border-right:1px solid #505050;border-bottom:1px solid #505050"></div>
<div class="t" style="left:435.2999999999999px;top:2.3px;font-size:12.3px;color:#303030">MFR_Code:</div>
<div class="ab" style="left:511.5px;top:0;width:116.5px;height:16.5px;background:#D4D0C8;border-left:1px solid #fff;border-right:1px solid #505050;border-bottom:1px solid #505050"></div>
<div class="t" style="left:514.2px;top:2.3px;font-size:12.3px;color:#303030">ManualDescription:</div>
<div class="ab" style="left:0px;top:16.5px;width:41.39999999999998px;height:16.625px;background:#D4D0C8;border-right:1px solid #404040;border-bottom:1px solid #505050"></div>
<div class="cell" style="left:3px;width:38.39999999999998px;top:19.1px;font-size:12px;letter-spacing:-0.007px;color:#404040">1793</div>
<div class="ab" style="left:41.39999999999998px;top:16.5px;width:47.80000000000007px;height:16.625px;background:#fff;border-right:1px solid #D8D8D8;border-bottom:1px solid #D8D8D8"></div>
<div class="cell" style="left:44.39999999999998px;width:44.80000000000007px;top:19.1px;font-size:12px;letter-spacing:-0.007px;color:#404040">40179</div>
<div class="ab" style="left:89.20000000000005px;top:16.5px;width:64.39999999999998px;height:16.625px;background:#fff;border-right:1px solid #D8D8D8;border-bottom:1px solid #D8D8D8"></div>
<div class="cell" style="left:92.20000000000005px;width:61.39999999999998px;top:19.1px;font-size:12px;letter-spacing:-0.244px;color:#404040">WM</div>
<div class="ab" style="left:153.60000000000002px;top:16.5px;width:86.89999999999998px;height:16.625px;background:#fff;border-right:1px solid #D8D8D8;border-bottom:1px solid #D8D8D8"></div>
<div class="cell" style="left:156.60000000000002px;width:83.89999999999998px;top:19.1px;font-size:12px;letter-spacing:0.218px;color:#404040">2.24-04-1</div>
<div class="ab" style="left:240.5px;top:16.5px;width:79.90000000000009px;height:16.625px;background:#fff;border-right:1px solid #D8D8D8;border-bottom:1px solid #D8D8D8"></div>
<div class="cell" style="left:243.5px;width:76.90000000000009px;top:19.1px;font-size:12px;letter-spacing:-0.007px;color:#404040">58</div>
<div class="ab" style="left:320.4000000000001px;top:16.5px;width:112.19999999999982px;height:16.625px;background:#fff;border-right:1px solid #D8D8D8;border-bottom:1px solid #D8D8D8"></div>
<div class="cell" style="left:323.4000000000001px;width:109.19999999999982px;top:19.1px;font-size:12px;letter-spacing:0.106px;color:#404040">19.11.14</div>
<div class="ab" style="left:432.5999999999999px;top:16.5px;width:78.90000000000009px;height:16.625px;background:#fff;border-right:1px solid #D8D8D8;border-bottom:1px solid #D8D8D8"></div>
<div class="cell" style="left:435.5999999999999px;width:75.90000000000009px;top:19.1px;font-size:12px;letter-spacing:0.028px;color:#404040">F6177</div>
<div class="ab" style="left:511.5px;top:16.5px;width:116.5px;height:16.625px;background:#fff;border-right:1px solid #D8D8D8;border-bottom:1px solid #D8D8D8"></div>
<div class="cell" style="left:514.5px;width:111.0px;top:19.1px;font-size:12px;letter-spacing:-0.041px;color:#404040">BATTERY MAIN 37AH</div>
<div class="ab" style="left:0px;top:33.125px;width:41.39999999999998px;height:16.625px;background:#D4D0C8;border-right:1px solid #404040;border-bottom:1px solid #505050"></div>
<div class="cell" style="left:3px;width:38.39999999999998px;top:35.725px;font-size:12px;letter-spacing:-0.007px;color:#404040">1794</div>
<div class="ab" style="left:41.39999999999998px;top:33.125px;width:47.80000000000007px;height:16.625px;background:#fff;border-right:1px solid #D8D8D8;border-bottom:1px solid #D8D8D8"></div>
<div class="cell" style="left:44.39999999999998px;width:44.80000000000007px;top:35.725px;font-size:12px;letter-spacing:-0.007px;color:#404040">40179</div>
<div class="ab" style="left:89.20000000000005px;top:33.125px;width:64.39999999999998px;height:16.625px;background:#fff;border-right:1px solid #D8D8D8;border-bottom:1px solid #D8D8D8"></div>
<div class="cell" style="left:92.20000000000005px;width:61.39999999999998px;top:35.725px;font-size:12px;letter-spacing:-0.244px;color:#404040">WM</div>
<div class="ab" style="left:153.60000000000002px;top:33.125px;width:86.89999999999998px;height:16.625px;background:#fff;border-right:1px solid #D8D8D8;border-bottom:1px solid #D8D8D8"></div>
<div class="cell" style="left:156.60000000000002px;width:83.89999999999998px;top:35.725px;font-size:12px;letter-spacing:0.218px;color:#404040">2.24-04-1</div>
<div class="ab" style="left:240.5px;top:33.125px;width:79.90000000000009px;height:16.625px;background:#fff;border-right:1px solid #D8D8D8;border-bottom:1px solid #D8D8D8"></div>
<div class="cell" style="left:243.5px;width:76.90000000000009px;top:35.725px;font-size:12px;letter-spacing:-0.007px;color:#404040">58</div>
<div class="ab" style="left:320.4000000000001px;top:33.125px;width:112.19999999999982px;height:16.625px;background:#fff;border-right:1px solid #D8D8D8;border-bottom:1px solid #D8D8D8"></div>
<div class="cell" style="left:323.4000000000001px;width:109.19999999999982px;top:35.725px;font-size:12px;letter-spacing:0.106px;color:#404040">19.11.14</div>
<div class="ab" style="left:432.5999999999999px;top:33.125px;width:78.90000000000009px;height:16.625px;background:#fff;border-right:1px solid #D8D8D8;border-bottom:1px solid #D8D8D8"></div>
<div class="cell" style="left:435.5999999999999px;width:75.90000000000009px;top:35.725px;font-size:12px;letter-spacing:0.028px;color:#404040">F6177</div>
<div class="ab" style="left:511.5px;top:33.125px;width:116.5px;height:16.625px;background:#fff;border-right:1px solid #D8D8D8;border-bottom:1px solid #D8D8D8"></div>
<div class="cell" style="left:514.5px;width:111.0px;top:35.725px;font-size:12px;letter-spacing:-0.041px;color:#404040">BATTERY MAIN 37AH</div>
<div class="ab" style="left:0px;top:49.75px;width:41.39999999999998px;height:16.625px;background:#D4D0C8;border-right:1px solid #404040;border-bottom:1px solid #505050"></div>
<div class="cell" style="left:3px;width:38.39999999999998px;top:52.35px;font-size:12px;letter-spacing:-0.007px;color:#404040">1831</div>
<div class="ab" style="left:41.39999999999998px;top:49.75px;width:47.80000000000007px;height:16.625px;background:#fff;border-right:1px solid #D8D8D8;border-bottom:1px solid #D8D8D8"></div>
<div class="cell" style="left:44.39999999999998px;width:44.80000000000007px;top:52.35px;font-size:12px;letter-spacing:-0.007px;color:#404040">40179</div>
<div class="ab" style="left:89.20000000000005px;top:49.75px;width:64.39999999999998px;height:16.625px;background:#fff;border-right:1px solid #D8D8D8;border-bottom:1px solid #D8D8D8"></div>
<div class="cell" style="left:92.20000000000005px;width:61.39999999999998px;top:52.35px;font-size:12px;letter-spacing:-0.244px;color:#404040">WM</div>
<div class="ab" style="left:153.60000000000002px;top:49.75px;width:86.89999999999998px;height:16.625px;background:#fff;border-right:1px solid #D8D8D8;border-bottom:1px solid #D8D8D8"></div>
<div class="cell" style="left:156.60000000000002px;width:83.89999999999998px;top:52.35px;font-size:12px;letter-spacing:0.218px;color:#404040">2.24-04-1</div>
<div class="ab" style="left:240.5px;top:49.75px;width:79.90000000000009px;height:16.625px;background:#fff;border-right:1px solid #D8D8D8;border-bottom:1px solid #D8D8D8"></div>
<div class="cell" style="left:243.5px;width:76.90000000000009px;top:52.35px;font-size:12px;letter-spacing:-0.007px;color:#404040">58</div>
<div class="ab" style="left:320.4000000000001px;top:49.75px;width:112.19999999999982px;height:16.625px;background:#fff;border-right:1px solid #D8D8D8;border-bottom:1px solid #D8D8D8"></div>
<div class="cell" style="left:323.4000000000001px;width:109.19999999999982px;top:52.35px;font-size:12px;letter-spacing:0.106px;color:#404040">19.11.14</div>
<div class="ab" style="left:432.5999999999999px;top:49.75px;width:78.90000000000009px;height:16.625px;background:#fff;border-right:1px solid #D8D8D8;border-bottom:1px solid #D8D8D8"></div>
<div class="cell" style="left:435.5999999999999px;width:75.90000000000009px;top:52.35px;font-size:12px;letter-spacing:0.028px;color:#404040">F6177</div>
<div class="ab" style="left:511.5px;top:49.75px;width:116.5px;height:16.625px;background:#fff;border-right:1px solid #D8D8D8;border-bottom:1px solid #D8D8D8"></div>
<div class="cell" style="left:514.5px;width:111.0px;top:52.35px;font-size:12px;letter-spacing:-0.041px;color:#404040">BATTERY MAIN 37AH</div>
<div class="ab" style="left:0px;top:66.375px;width:41.39999999999998px;height:16.625px;background:#D4D0C8;border-right:1px solid #404040;border-bottom:1px solid #505050"></div>
<div class="cell" style="left:3px;width:38.39999999999998px;top:68.975px;font-size:12px;letter-spacing:-0.007px;color:#404040">1871</div>
<div class="ab" style="left:41.39999999999998px;top:66.375px;width:47.80000000000007px;height:16.625px;background:#fff;border-right:1px solid #D8D8D8;border-bottom:1px solid #D8D8D8"></div>
<div class="cell" style="left:44.39999999999998px;width:44.80000000000007px;top:68.975px;font-size:12px;letter-spacing:-0.007px;color:#404040">40179</div>
<div class="ab" style="left:89.20000000000005px;top:66.375px;width:64.39999999999998px;height:16.625px;background:#fff;border-right:1px solid #D8D8D8;border-bottom:1px solid #D8D8D8"></div>
<div class="cell" style="left:92.20000000000005px;width:61.39999999999998px;top:68.975px;font-size:12px;letter-spacing:-0.108px;color:#404040">CMM</div>
<div class="ab" style="left:153.60000000000002px;top:66.375px;width:86.89999999999998px;height:16.625px;background:#fff;border-right:1px solid #D8D8D8;border-bottom:1px solid #D8D8D8"></div>
<div class="cell" style="left:156.60000000000002px;width:83.89999999999998px;top:68.975px;font-size:12px;letter-spacing:0.357px;color:#404040">24-32-11</div>
<div class="ab" style="left:240.5px;top:66.375px;width:79.90000000000009px;height:16.625px;background:#fff;border-right:1px solid #D8D8D8;border-bottom:1px solid #D8D8D8"></div>
<div class="cell" style="left:243.5px;width:76.90000000000009px;top:68.975px;font-size:12px;letter-spacing:-0.007px;color:#404040">1</div>
<div class="ab" style="left:320.4000000000001px;top:66.375px;width:112.19999999999982px;height:16.625px;background:#fff;border-right:1px solid #D8D8D8;border-bottom:1px solid #D8D8D8"></div>
<div class="cell" style="left:323.4000000000001px;width:109.19999999999982px;top:68.975px;font-size:12px;letter-spacing:-0.006px;color:#404040">25.08.87</div>
<div class="ab" style="left:432.5999999999999px;top:66.375px;width:78.90000000000009px;height:16.625px;background:#fff;border-right:1px solid #D8D8D8;border-bottom:1px solid #D8D8D8"></div>
<div class="cell" style="left:435.5999999999999px;width:75.90000000000009px;top:68.975px;font-size:12px;letter-spacing:0.028px;color:#404040">F6177</div>
<div class="ab" style="left:511.5px;top:66.375px;width:116.5px;height:16.625px;background:#fff;border-right:1px solid #D8D8D8;border-bottom:1px solid #D8D8D8"></div>
<div class="cell" style="left:514.5px;width:111.0px;top:68.975px;font-size:12px;letter-spacing:-0.041px;color:#404040">BATTERY MAIN 37AH</div>
<div class="ab" style="left:0px;top:83.0px;width:41.39999999999998px;height:16.625px;background:#D4D0C8;border-right:1px solid #404040;border-bottom:1px solid #505050"></div>
<div class="cell" style="left:3px;width:38.39999999999998px;top:85.6px;font-size:12px;letter-spacing:-0.007px;color:#404040">1872</div>
<div class="ab" style="left:41.39999999999998px;top:83.0px;width:47.80000000000007px;height:16.625px;background:#fff;border-right:1px solid #D8D8D8;border-bottom:1px solid #D8D8D8"></div>
<div class="cell" style="left:44.39999999999998px;width:44.80000000000007px;top:85.6px;font-size:12px;letter-spacing:-0.007px;color:#404040">40179</div>
<div class="ab" style="left:89.20000000000005px;top:83.0px;width:64.39999999999998px;height:16.625px;background:#fff;border-right:1px solid #D8D8D8;border-bottom:1px solid #D8D8D8"></div>
<div class="cell" style="left:92.20000000000005px;width:61.39999999999998px;top:85.6px;font-size:12px;letter-spacing:-0.108px;color:#404040">CMM</div>
<div class="ab" style="left:153.60000000000002px;top:83.0px;width:86.89999999999998px;height:16.625px;background:#fff;border-right:1px solid #D8D8D8;border-bottom:1px solid #D8D8D8"></div>
<div class="cell" style="left:156.60000000000002px;width:83.89999999999998px;top:85.6px;font-size:12px;letter-spacing:0.357px;color:#404040">24-32-11</div>
<div class="ab" style="left:240.5px;top:83.0px;width:79.90000000000009px;height:16.625px;background:#fff;border-right:1px solid #D8D8D8;border-bottom:1px solid #D8D8D8"></div>
<div class="cell" style="left:243.5px;width:76.90000000000009px;top:85.6px;font-size:12px;letter-spacing:-0.007px;color:#404040">1</div>
<div class="ab" style="left:320.4000000000001px;top:83.0px;width:112.19999999999982px;height:16.625px;background:#fff;border-right:1px solid #D8D8D8;border-bottom:1px solid #D8D8D8"></div>
<div class="cell" style="left:323.4000000000001px;width:109.19999999999982px;top:85.6px;font-size:12px;letter-spacing:-0.006px;color:#404040">25.08.87</div>
<div class="ab" style="left:432.5999999999999px;top:83.0px;width:78.90000000000009px;height:16.625px;background:#fff;border-right:1px solid #D8D8D8;border-bottom:1px solid #D8D8D8"></div>
<div class="cell" style="left:435.5999999999999px;width:75.90000000000009px;top:85.6px;font-size:12px;letter-spacing:0.028px;color:#404040">F6177</div>
<div class="ab" style="left:511.5px;top:83.0px;width:116.5px;height:16.625px;background:#fff;border-right:1px solid #D8D8D8;border-bottom:1px solid #D8D8D8"></div>
<div class="cell" style="left:514.5px;width:111.0px;top:85.6px;font-size:12px;letter-spacing:-0.041px;color:#404040">BATTERY MAIN 37AH</div>
<div class="ab" style="left:0px;top:99.625px;width:41.39999999999998px;height:16.625px;background:#D4D0C8;border-right:1px solid #404040;border-bottom:1px solid #505050"></div>
<div class="cell" style="left:3px;width:38.39999999999998px;top:102.225px;font-size:12px;letter-spacing:-0.007px;color:#404040">1873</div>
<div class="ab" style="left:41.39999999999998px;top:99.625px;width:47.80000000000007px;height:16.625px;background:#fff;border-right:1px solid #D8D8D8;border-bottom:1px solid #D8D8D8"></div>
<div class="cell" style="left:44.39999999999998px;width:44.80000000000007px;top:102.225px;font-size:12px;letter-spacing:-0.007px;color:#404040">40179</div>
<div class="ab" style="left:89.20000000000005px;top:99.625px;width:64.39999999999998px;height:16.625px;background:#fff;border-right:1px solid #D8D8D8;border-bottom:1px solid #D8D8D8"></div>
<div class="cell" style="left:92.20000000000005px;width:61.39999999999998px;top:102.225px;font-size:12px;letter-spacing:-0.108px;color:#404040">CMM</div>
<div class="ab" style="left:153.60000000000002px;top:99.625px;width:86.89999999999998px;height:16.625px;background:#fff;border-right:1px solid #D8D8D8;border-bottom:1px solid #D8D8D8"></div>
<div class="cell" style="left:156.60000000000002px;width:83.89999999999998px;top:102.225px;font-size:12px;letter-spacing:0.357px;color:#404040">24-32-11</div>
<div class="ab" style="left:240.5px;top:99.625px;width:79.90000000000009px;height:16.625px;background:#fff;border-right:1px solid #D8D8D8;border-bottom:1px solid #D8D8D8"></div>
<div class="cell" style="left:243.5px;width:76.90000000000009px;top:102.225px;font-size:12px;letter-spacing:-0.007px;color:#404040">1</div>
<div class="ab" style="left:320.4000000000001px;top:99.625px;width:112.19999999999982px;height:16.625px;background:#fff;border-right:1px solid #D8D8D8;border-bottom:1px solid #D8D8D8"></div>
<div class="cell" style="left:323.4000000000001px;width:109.19999999999982px;top:102.225px;font-size:12px;letter-spacing:-0.006px;color:#404040">25.08.87</div>
<div class="ab" style="left:432.5999999999999px;top:99.625px;width:78.90000000000009px;height:16.625px;background:#fff;border-right:1px solid #D8D8D8;border-bottom:1px solid #D8D8D8"></div>
<div class="cell" style="left:435.5999999999999px;width:75.90000000000009px;top:102.225px;font-size:12px;letter-spacing:0.028px;color:#404040">F6177</div>
<div class="ab" style="left:511.5px;top:99.625px;width:116.5px;height:16.625px;background:#fff;border-right:1px solid #D8D8D8;border-bottom:1px solid #D8D8D8"></div>
<div class="cell" style="left:514.5px;width:111.0px;top:102.225px;font-size:12px;letter-spacing:-0.041px;color:#404040">BATTERY MAIN 37AH</div>
</div>
<div class="ab" style="left:744px;top:691.2px;width:629px;height:14.6px;background:repeating-conic-gradient(#F0EEF0 0 25%, #DCDAD8 0 50%) 0 0/2px 2px"></div><div class="ab" style="left:744px;top:705.8px;width:629px;height:6px;background:#E6E6F2"></div>
<div class="btn3d" style="left:744.3px;top:691.2px;width:14.6px;height:14.6px"></div>
<div class="btn3d" style="left:759px;top:691.2px;width:14.4px;height:14.6px"></div>
<div class="btn3d" style="left:1357.5px;top:691.2px;width:14.5px;height:14.6px"></div>
<svg class="ab" style="left:749px;top:695px" width="5" height="7"><path d="M4.5 0 L0.5 3.5 L4.5 7z" fill="#000"/></svg>
<svg class="ab" style="left:1363px;top:695px" width="5" height="7"><path d="M0.5 0 L4.5 3.5 L0.5 7z" fill="#000"/></svg>
<div class="ab" style="left:743px;top:712.8px;width:630px;height:12.8px;background:#D4D0C8"></div>
<div class="sunk" style="left:743px;top:712.8px;width:175.6px;height:12.8px;"></div>
<div class="t" style="left:746px;top:715.5px;font-size:8.2px;-webkit-text-stroke:0.2px #111;color:#111">Found 6 Manuals</div>
<div class="ab" style="left:0;top:747.5px;width:1400px;height:1.5px;background:#fff"></div>
<svg class="ab" style="left:0;top:0;z-index:10" width="1400" height="749" viewBox="0 0 1400 749">
<path d="M238.7 134 L330 210 L303 226 Z" fill="#1496F0"/>
<circle cx="321" cy="228.5" r="19" fill="#1496F0" stroke="#fff" stroke-width="2.2"/>
<circle cx="321" cy="228.5" r="20.2" fill="none" stroke="#333" stroke-width="1.4"/>
</svg>
<div class="t" style="left:314.5px;top:218.5px;font-size:21px;font-weight:bold;color:#fff;z-index:11">3</div>
</body></html>
